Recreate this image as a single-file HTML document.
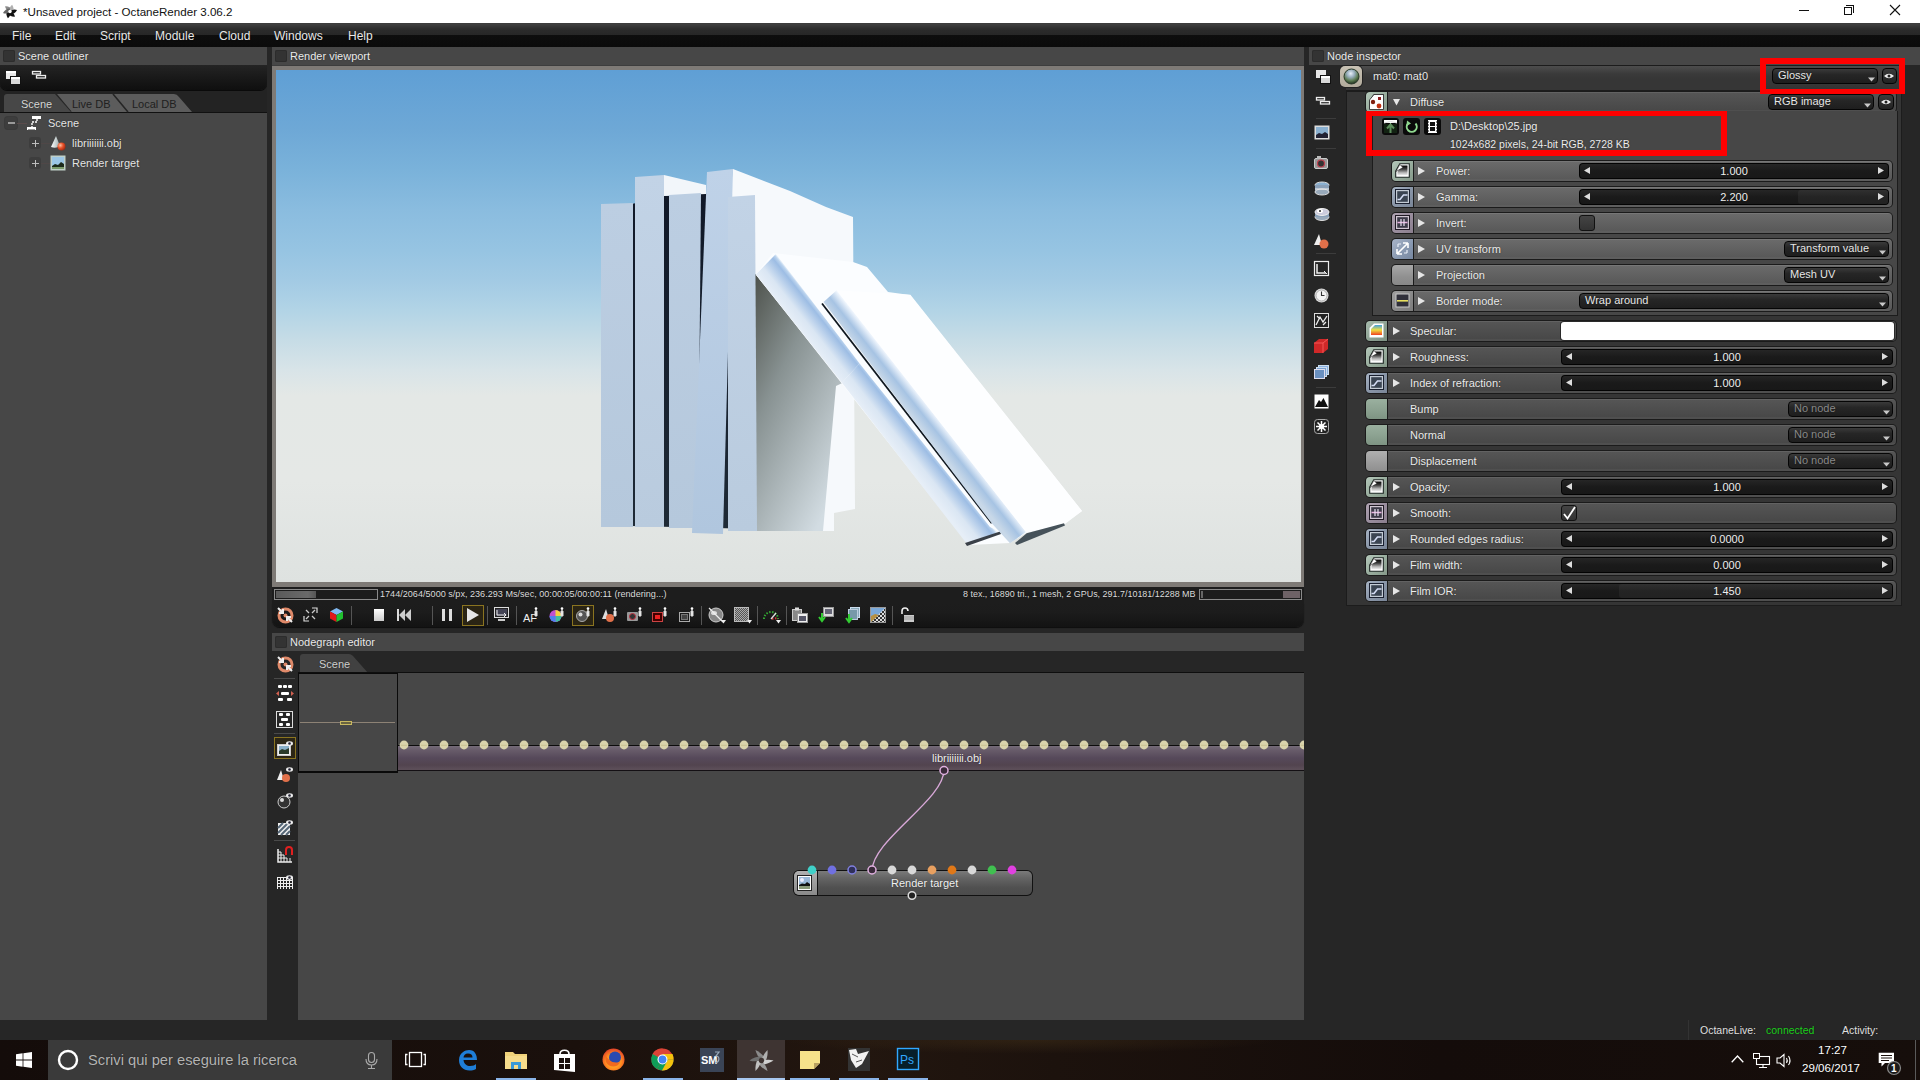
<!DOCTYPE html>
<html><head><meta charset="utf-8">
<style>
*{margin:0;padding:0;box-sizing:border-box}
html,body{width:1920px;height:1080px;overflow:hidden;background:#262626;font-family:"Liberation Sans",sans-serif;position:relative}
.a{position:absolute}
svg.a{overflow:visible}
.t{position:absolute;white-space:pre;color:#e6e6e6;font-size:11px;line-height:13px;text-shadow:0 0 1.2px rgba(0,0,0,0.55)}
#menu .t{font-size:12px;color:#e8e8e8;top:6px;line-height:15px}
.ph{position:absolute;height:18px;background:#474747}
.ph .sq{position:absolute;left:3px;top:3px;width:12px;height:12px;background:#333;border-radius:2px;box-shadow:inset 0 0 0 1px #2c2c2c}
.ph .t{left:18px;top:3px;color:#ececec}
</style></head><body>
<!-- title bar -->
<div class="a" style="left:0;top:0;width:1920px;height:23px;background:#fff">
  <svg class="a" style="left:3px;top:4px" width="14" height="15" viewBox="-7 -7.5 14 15"><path d="M0 0 C -2.2 -2.2 -2.6 -4.8 -1.6 -7 C 1.2 -5.6 3 -3.2 3 0 Z" fill="#8a8a8a" transform="rotate(-30)"/><path d="M0 0 C -2.2 -2.2 -2.6 -4.8 -1.6 -7 C 1.2 -5.6 3 -3.2 3 0 Z" fill="#b0b0b0" transform="rotate(30)"/><path d="M0 0 C -2.2 -2.2 -2.6 -4.8 -1.6 -7 C 1.2 -5.6 3 -3.2 3 0 Z" fill="#111" transform="rotate(90)"/><path d="M0 0 C -2.2 -2.2 -2.6 -4.8 -1.6 -7 C 1.2 -5.6 3 -3.2 3 0 Z" fill="#111" transform="rotate(150)"/><path d="M0 0 C -2.2 -2.2 -2.6 -4.8 -1.6 -7 C 1.2 -5.6 3 -3.2 3 0 Z" fill="#111" transform="rotate(210)"/><path d="M0 0 C -2.2 -2.2 -2.6 -4.8 -1.6 -7 C 1.2 -5.6 3 -3.2 3 0 Z" fill="#666" transform="rotate(270)"/><circle cx="0" cy="0" r="1.7" fill="#fff"/></svg>
  <div class="t" style="left:23px;top:5px;font-size:11.6px;color:#111;line-height:14px;text-shadow:none">*Unsaved project - OctaneRender 3.06.2</div>
  <div class="a" style="left:1799px;top:10px;width:10px;height:1px;background:#111"></div>
  <div class="a" style="left:1844px;top:7px;width:8px;height:8px;border:1px solid #111"></div>
  <div class="a" style="left:1846px;top:5px;width:8px;height:8px;border-top:1px solid #111;border-right:1px solid #111"></div>
  <svg class="a" style="left:1890px;top:5px" width="10" height="10" viewBox="0 0 10 10"><path d="M0 0 L10 10 M10 0 L0 10" stroke="#111" stroke-width="1.1"/></svg>
</div>
<div id="menu" class="a" style="left:0;top:23px;width:1920px;height:24px;background:linear-gradient(#3a3a3a 0,#404040 1px,#2c2c2c 6px,#272727 12px,#0e0e0e 12px,#0b0b0b 24px)">
  <div class="t" style="left:12px">File</div>
  <div class="t" style="left:55px">Edit</div>
  <div class="t" style="left:100px">Script</div>
  <div class="t" style="left:155px">Module</div>
  <div class="t" style="left:219px">Cloud</div>
  <div class="t" style="left:274px">Windows</div>
  <div class="t" style="left:348px">Help</div>
</div>
<!-- left panel -->
<div class="a" style="left:0;top:47px;width:267px;height:973px;background:#474747"></div>
<div class="ph" style="left:0;top:47px;width:267px"><div class="sq"></div><div class="t">Scene outliner</div></div>
<div class="a" style="left:0;top:65px;width:267px;height:48px;background:#232323"></div><div class="a" style="left:0;top:112px;width:267px;height:1px;background:#111"></div>
<div class="a" style="left:0;top:65px;width:267px;height:25px;background:linear-gradient(#242424,#181818 55%,#0f0f0f);border-radius:0 0 7px 7px;box-shadow:0 1px 0 #0a0a0a"></div>
<svg class="a" style="left:5px;top:70px" width="17" height="16" viewBox="0 0 17 16">
 <rect x="1" y="1" width="10" height="8" fill="#e8e8e8"/><rect x="1" y="1" width="10" height="2" fill="#fff"/>
 <rect x="5" y="6" width="11" height="9" fill="#111"/><rect x="6" y="7" width="9" height="7" fill="#d8d8d8"/><rect x="6" y="7" width="9" height="2" fill="#fff"/>
</svg>
<svg class="a" style="left:31px;top:70px" width="16" height="10" viewBox="0 0 16 10">
 <rect x="1.5" y="1.5" width="8" height="2.5" fill="none" stroke="#eee" stroke-width="1.3"/>
 <rect x="5.5" y="5.5" width="9" height="2.5" fill="none" stroke="#eee" stroke-width="1.3"/>
</svg>
<svg class="a" style="left:0;top:93px" width="267" height="20" viewBox="0 93 267 20">
 <path d="M113 94 L174 94 Q177 94 179 97 L192 112 L128 112 Z" fill="#5c5c5c"/>
 <path d="M56 94 L113 94 L128 112 L71 112 Z" fill="#5c5c5c"/>
 <path d="M113 94 L128 112 M56 94 L71 112" stroke="#262626" stroke-width="1.6"/>
 <path d="M4 112 L4 97 Q4 94 7 94 L55 94 L71 112 Z" fill="#474747"/>
</svg>
<div class="t" style="left:21px;top:98px;color:#d8d8d8">Scene</div>
<div class="t" style="left:72px;top:98px;color:#202020;text-shadow:none">Live DB</div>
<div class="t" style="left:132px;top:98px;color:#202020;text-shadow:none">Local DB</div>
<div class="a" style="left:5px;top:117px;width:12px;height:12px;border-radius:3px;background:#3d3d3d;box-shadow:0 0 0 1px #3a3a3a"></div>
<div class="a" style="left:8px;top:122px;width:7px;height:1.5px;background:#9a9a9a"></div>
<div class="a" style="left:17px;top:123px;width:10px;height:1px;background:#5a4b4b"></div>
<svg class="a" style="left:26px;top:115px" width="16" height="16" viewBox="0 0 16 16">
 <rect x="6" y="1" width="9" height="3" fill="#fff"/><rect x="1" y="12" width="9" height="3" fill="#fff"/>
 <path d="M11 4 L11 7 L6 7 L6 12" stroke="#fff" stroke-width="1.4" fill="none" stroke-dasharray="2 1"/>
 <rect x="2" y="14" width="7" height="1" fill="#999"/>
</svg>
<div class="t" style="left:48px;top:117px">Scene</div>
<div class="a" style="left:29px;top:137px;width:12px;height:12px;border-radius:3px;background:#3d3d3d"></div>
<div class="a" style="left:32px;top:142.5px;width:7px;height:1.3px;background:#bdbdbd"></div>
<div class="a" style="left:34.8px;top:139.5px;width:1.3px;height:7px;background:#bdbdbd"></div>
<div class="a" style="left:29px;top:157px;width:12px;height:12px;border-radius:3px;background:#3d3d3d"></div>
<div class="a" style="left:32px;top:162.5px;width:7px;height:1.3px;background:#bdbdbd"></div>
<div class="a" style="left:34.8px;top:159.5px;width:1.3px;height:7px;background:#bdbdbd"></div>
<div class="a" style="left:41px;top:143px;width:9px;height:1px;background:#4f4747"></div>
<div class="a" style="left:41px;top:163px;width:9px;height:1px;background:#4f4747"></div>
<svg class="a" style="left:50px;top:135px" width="16" height="16" viewBox="0 0 16 16">
 <defs><linearGradient id="cone" x1="0" x2="1"><stop offset="0" stop-color="#fff"/><stop offset="1" stop-color="#9aa"/></linearGradient>
 <radialGradient id="ball" cx="0.35" cy="0.35" r="0.7"><stop offset="0" stop-color="#ffc0a0"/><stop offset="0.5" stop-color="#e8522a"/><stop offset="1" stop-color="#a02810"/></radialGradient></defs>
 <path d="M6 1 L1 12 Q6 14 10 11 Z" fill="url(#cone)"/>
 <circle cx="11.5" cy="11.5" r="4" fill="url(#ball)"/>
</svg>
<div class="t" style="left:72px;top:137px">libriiiiiii.obj</div>
<svg class="a" style="left:50px;top:155px" width="16" height="16" viewBox="0 0 16 16">
 <rect x="0.5" y="0.5" width="15" height="15" fill="#bfcfc8"/>
 <rect x="2" y="2" width="12" height="12" fill="#9bc6e6"/>
 <path d="M2 11 L5 9 L8 10 L11 7 L14 9 L14 14 L2 14 Z" fill="#1c2a1c"/>
 <rect x="2" y="12" width="12" height="2" fill="#7a9a6a"/>
</svg>
<div class="t" style="left:72px;top:157px">Render target</div>
<!-- viewport -->
<div class="ph" style="left:272px;top:47px;width:1032px"><div class="sq"></div><div class="t">Render viewport</div></div>
<div class="a" style="left:272px;top:65px;width:1032px;height:522px;background:#7e7a76;border-top:1px solid #3d3d3d"></div>
<div class="a" style="left:276px;top:70px;width:1025px;height:512px;background:linear-gradient(#5f9fd5 0.0%,#6ea8d6 11.7%,#7ab2da 19.5%,#8abcdf 27.3%,#96c4e2 35.2%,#a2cae4 41.0%,#b2d4e6 46.9%,#c6dce6 52.7%,#d8e4e8 58.6%,#e4e8e6 63.5%,#e5e8e6 80.1%,#dee2e0 100.0%)"></div>
<svg class="a" style="left:0;top:0" width="1920" height="1080" viewBox="0 0 1920 1080">
<defs>
 <linearGradient id="sp1" x1="0" y1="0" x2="0" y2="1"><stop offset="0" stop-color="#bccee2"/><stop offset="1" stop-color="#b5c8dc"/></linearGradient>
 <linearGradient id="sp2" x1="0" y1="0" x2="0" y2="1"><stop offset="0" stop-color="#c2d3e6"/><stop offset="1" stop-color="#b9cbde"/></linearGradient>
 <linearGradient id="sp4" x1="0" y1="0" x2="0" y2="1"><stop offset="0" stop-color="#bfd2e8"/><stop offset="1" stop-color="#b0c6de"/></linearGradient>
 <linearGradient id="gap" x1="0" y1="0" x2="0" y2="1"><stop offset="0" stop-color="#101828"/><stop offset="1" stop-color="#1e2a36"/></linearGradient>
 <linearGradient id="shade" x1="0" y1="0" x2="0.7" y2="1"><stop offset="0" stop-color="#4c504a"/><stop offset="0.4" stop-color="#889292"/><stop offset="1" stop-color="#d2dce2"/></linearGradient>
 <linearGradient id="bandA" gradientUnits="userSpaceOnUse" x1="755.9" y1="274.6" x2="778.3" y2="256.8"><stop offset="0" stop-color="#e6eef7"/><stop offset="0.35" stop-color="#dae6f3"/><stop offset="0.82" stop-color="#9dbde4"/><stop offset="0.93" stop-color="#bcd4ee"/><stop offset="1" stop-color="#f4f8fc"/></linearGradient>
 <linearGradient id="bandB" gradientUnits="userSpaceOnUse" x1="821.9" y1="303.5" x2="837.5" y2="291.1"><stop offset="0" stop-color="#c8d8e8"/><stop offset="0.5" stop-color="#a6c3e3"/><stop offset="1" stop-color="#f6faff"/></linearGradient>
 <linearGradient id="ground" x1="0" y1="0" x2="0" y2="1"><stop offset="0" stop-color="#c8d0d0" stop-opacity="0.6"/><stop offset="1" stop-color="#dde2e0" stop-opacity="0"/></linearGradient>
</defs>
<polygon points="632,204 664,196 701,193 757,196 757,529 632,526" fill="url(#gap)"/>
<polygon points="601,204 633,203 633,527 601,527" fill="url(#sp1)"/>
<polygon points="635,177 664,175 664,527 635,527" fill="url(#sp2)"/>
<polygon points="664,175 706,185 706,194 664,196" fill="#f2f6fa"/>
<polygon points="669,195 701,193 698,528 669,528" fill="url(#sp1)"/>
<polygon points="730,197 733,169 790,191 826,207 853,217 855,509 834,513 834,531 757,531" fill="#f6f9fc"/>
<polygon points="754,272.5 842.3,383 836,386 823,531 754,531" fill="url(#shade)"/>
<polygon points="707,172 733,169 723,534 692,533" fill="url(#sp4)"/>
<polygon points="728,197 755,195 757,531 728,531" fill="url(#sp2)"/>
<polygon points="773,253 853,262 867,267 888,292 910,295 1082,511 1065,524 1026,533 1010,543 969,545 755.9,274.6" fill="#fbfdff"/>
<polygon points="755.9,274.6 776,253.9 859.6,363.5 841.9,382.8" fill="url(#bandA)"/>
<polygon points="841.9,382.8 859.6,363.5 990,527 1000,532 967,544" fill="url(#bandA)"/>
<polygon points="965,543 1000,531.5 1001,534 967,546" fill="#3a4048"/>
<path d="M822 303.5 L991.7 523.3" stroke="#101820" stroke-width="1.8"/>
<polygon points="823.5,302 836.7,290.2 1026,532 1010,543.3 991.7,523.3" fill="url(#bandB)"/>
<polygon points="836.7,290.2 910.4,294.8 1082,511 1065,523.3 1026,532" fill="#fdfeff"/>
<polygon points="1015,543 1026.7,533.3 1064,523.3 1065,525.5 1017,545" fill="#46525a"/>
</svg>
<div class="a" style="left:272px;top:587px;width:1032px;height:16px;background:#1d1d1d"></div>
<div class="a" style="left:274px;top:589px;width:104px;height:11px;border:1px solid #8a8a8a;background:#1c1c1c"></div>
<div class="a" style="left:276px;top:591px;width:40px;height:7px;background:linear-gradient(90deg,#5a5a5a,#6a6a6a 80%,#555)"></div>
<div class="t" style="left:380px;top:588px;font-size:9.1px;line-height:12px;color:#dcdcdc">1744/2064/5000 s/px, 236.293 Ms/sec, 00:00:05/00:00:11 (rendering...)</div>
<div class="t" style="left:963px;top:588px;font-size:8.95px;line-height:12px;color:#dcdcdc">8 tex., 16890 tri., 1 mesh, 2 GPUs, 291.7/10181/12288 MB</div>
<div class="a" style="left:1199px;top:589px;width:103px;height:11px;border:1px solid #8a8a8a;background:#1c1c1c"></div>
<div class="a" style="left:1201px;top:591px;width:2px;height:7px;background:#666"></div>
<div class="a" style="left:1283px;top:591px;width:17px;height:7px;background:#6e6266"></div>
<div class="a" style="left:272px;top:603px;width:1032px;height:30px;background:#262626"></div>
<div class="a" style="left:272px;top:603px;width:1032px;height:24px;background:linear-gradient(#1d1d1d,#1c1c1c 40%,#131313);border-radius:0 0 8px 8px;box-shadow:0 1px 1px #0e0e0e"></div>
<svg class="a" style="left:277px;top:607px" width="16" height="16" viewBox="0 0 16 16"><circle cx="8.5" cy="8.5" r="6.5" fill="none" stroke="#e08a6a" stroke-width="3"/><circle cx="8.5" cy="8.5" r="2" fill="#e08a6a"/><path d="M1 1 L6 6 M6 2 L6 6 L2 6" stroke="#eee" stroke-width="2" fill="none"/><path d="M15 15 L10 10 M10 14 L10 10 L14 10" stroke="#eee" stroke-width="2" fill="none"/></svg>
<svg class="a" style="left:303px;top:607px" width="15" height="15" viewBox="0 0 15 15"><path d="M1 9 L1 14 L6 14 M9 1 L14 1 L14 6" stroke="#ddd" stroke-width="1.2" fill="none"/><path d="M3 3 L6 6 M9 6 L12 3 M3 12 L6 9 M12 12 L9 9" stroke="#ccc" stroke-width="1.3"/></svg>
<svg class="a" style="left:329px;top:607px" width="15" height="16" viewBox="0 0 15 16"><path d="M7.5 1 L14 4.5 L7.5 8 L1 4.5 Z" fill="#80b8f0"/><path d="M1 4.5 L7.5 8 L7.5 15 L1 11.5 Z" fill="#e01818"/><path d="M14 4.5 L7.5 8 L7.5 15 L14 11.5 Z" fill="#20c030"/></svg>
<div class="a" style="left:351px;top:606px;width:1px;height:19px;background:#555"></div>
<div class="a" style="left:374px;top:609px;width:10px;height:12px;background:linear-gradient(#fff,#ccc)"></div>
<svg class="a" style="left:397px;top:609px" width="15" height="12" viewBox="0 0 15 12"><rect x="0" y="0" width="2" height="12" fill="#ddd"/><path d="M2 6 L8 0 L8 12 Z M8 6 L14 0 L14 12 Z" fill="#ccc"/></svg>
<div class="a" style="left:432px;top:606px;width:1px;height:19px;background:#555"></div>
<div class="a" style="left:442px;top:609px;width:3px;height:12px;background:#ddd"></div><div class="a" style="left:449px;top:609px;width:3px;height:12px;background:#ddd"></div>
<div class="a" style="left:462px;top:605px;width:22px;height:21px;border:1px solid #8a7420;background:#2a2414"></div>
<svg class="a" style="left:467px;top:608px" width="12" height="14" viewBox="0 0 12 14"><path d="M0 0 L12 7 L0 14 Z" fill="#e6e6e6"/></svg>
<div class="a" style="left:487px;top:606px;width:1px;height:19px;background:#555"></div>
<svg class="a" style="left:494px;top:607px" width="15" height="15" viewBox="0 0 15 15"><rect x="0.5" y="0.5" width="14" height="10" fill="#222" stroke="#ddd"/><rect x="2" y="2" width="11" height="7" fill="#445"/><path d="M3 3 L3 8 L12 8 M10 6 L12 8 L10 10" stroke="#eee" fill="none"/><rect x="4" y="12" width="7" height="2" fill="#ccc"/></svg>
<div class="a" style="left:516px;top:606px;width:1px;height:19px;background:#555"></div>
<svg class="a" style="left:523px;top:607px" width="15" height="16" viewBox="0 0 15 16"><text x="0" y="15" font-size="11" font-family="Liberation Sans" fill="#eee">AF</text><path d="M13 1 L13 5 M12 4 L14 4 L14 9 L12 9 Z" stroke="#ddd" stroke-width="1" fill="#eee"/><circle cx="13" cy="1.5" r="1.3" fill="#fff"/></svg>
<svg class="a" style="left:549px;top:607px" width="15" height="16" viewBox="0 0 15 16"><circle cx="6.5" cy="9" r="6" fill="#c050d0"/><path d="M6.5 9 L6.5 3 A6 6 0 0 1 12.5 9 Z" fill="#f0d040"/><path d="M6.5 9 L12.5 9 A6 6 0 0 1 6.5 15 Z" fill="#40c0a0"/><path d="M6.5 9 L6.5 15 A6 6 0 0 1 0.5 9 Z" fill="#5080f0"/><path d="M13 1 L13 5 M12 4 L14 4 L14 9 L12 9 Z" stroke="#ddd" stroke-width="1" fill="#eee"/><circle cx="13" cy="1.5" r="1.3" fill="#fff"/></svg>
<div class="a" style="left:572px;top:605px;width:22px;height:21px;border:1px solid #8a7420;background:#2a2414"></div>
<svg class="a" style="left:575px;top:607px" width="16" height="16" viewBox="0 0 16 16"><circle cx="7" cy="9" r="5.5" fill="#555" stroke="#aaa"/><circle cx="5.5" cy="7.5" r="2" fill="#ddd"/><path d="M13 1 L13 5 M12 4 L14 4 L14 9 L12 9 Z" stroke="#ddd" stroke-width="1" fill="#eee"/><circle cx="13" cy="1.5" r="1.3" fill="#fff"/></svg>
<svg class="a" style="left:602px;top:607px" width="15" height="16" viewBox="0 0 15 16"><path d="M4 2 L0 12 L7 12 Z" fill="#ddd"/><circle cx="8" cy="11" r="4" fill="#e0704a"/><path d="M13 1 L13 5 M12 4 L14 4 L14 9 L12 9 Z" stroke="#ddd" stroke-width="1" fill="#eee"/><circle cx="13" cy="1.5" r="1.3" fill="#fff"/></svg>
<svg class="a" style="left:627px;top:607px" width="15" height="16" viewBox="0 0 15 16"><rect x="0" y="5" width="11" height="9" rx="1" fill="#999"/><circle cx="5.5" cy="9.5" r="3" fill="#333" stroke="#c03040"/><path d="M13 1 L13 5 M12 4 L14 4 L14 9 L12 9 Z" stroke="#ddd" stroke-width="1" fill="#eee"/><circle cx="13" cy="1.5" r="1.3" fill="#fff"/></svg>
<svg class="a" style="left:652px;top:607px" width="15" height="16" viewBox="0 0 15 16"><rect x="0.5" y="5.5" width="10" height="9" fill="#400" stroke="#c44"/><rect x="3" y="8" width="5" height="4" fill="#e22"/><path d="M13 1 L13 5 M12 4 L14 4 L14 9 L12 9 Z" stroke="#ddd" stroke-width="1" fill="#eee"/><circle cx="13" cy="1.5" r="1.3" fill="#fff"/></svg>
<svg class="a" style="left:679px;top:607px" width="16" height="16" viewBox="0 0 16 16"><rect x="0.5" y="5.5" width="10" height="9" fill="none" stroke="#aaa"/><rect x="2.5" y="7.5" width="6" height="5" fill="#444" stroke="#777"/><path d="M13 1 L13 5 M12 4 L14 4 L14 9 L12 9 Z" stroke="#ddd" stroke-width="1" fill="#eee"/><circle cx="13" cy="1.5" r="1.3" fill="#fff"/></svg>
<div class="a" style="left:701px;top:606px;width:1px;height:19px;background:#555"></div>
<svg class="a" style="left:708px;top:607px" width="19" height="17" viewBox="0 0 19 17"><circle cx="8" cy="8" r="7" fill="#888" stroke="#ccc"/><ellipse cx="6" cy="6" rx="3" ry="2" fill="#ddd"/><path d="M1 1 L15 15" stroke="#eee" stroke-width="1.2"/><path d="M13 13 L18 13 L15.5 16.5 Z" fill="#eee"/></svg>
<svg class="a" style="left:734px;top:607px" width="19" height="17" viewBox="0 0 19 17"><rect x="0.5" y="0.5" width="14" height="14" fill="#777" stroke="#bbb"/><path d="M1 1 h13 v13 h-13 z" fill="url(#chk)"/><path d="M13 13 L18 13 L15.5 16.5 Z" fill="#eee"/><defs><pattern id="chk" width="2" height="2" patternUnits="userSpaceOnUse"><rect width="1" height="1" fill="#555"/><rect x="1" y="1" width="1" height="1" fill="#555"/><rect x="1" width="1" height="1" fill="#aaa"/><rect y="1" width="1" height="1" fill="#aaa"/></pattern></defs></svg>
<div class="a" style="left:757px;top:606px;width:1px;height:19px;background:#555"></div>
<svg class="a" style="left:762px;top:607px" width="20" height="17" viewBox="0 0 20 17"><path d="M2 12 A7 7 0 0 1 16 12" stroke="#3a3" stroke-width="2" stroke-dasharray="1.5 1.5" fill="none"/><path d="M10 12 A7 7 0 0 1 16 12" stroke="#c33" stroke-width="2" stroke-dasharray="1.5 1.5" fill="none"/><path d="M9 12 L14 6" stroke="#ddd" stroke-width="1.3"/><path d="M14 13 L19 13 L16.5 16.5 Z" fill="#eee"/></svg>
<div class="a" style="left:786px;top:606px;width:1px;height:19px;background:#555"></div>
<svg class="a" style="left:792px;top:607px" width="16" height="16" viewBox="0 0 16 16"><rect x="0.5" y="2.5" width="9" height="11" fill="#888" stroke="#ccc"/><rect x="3" y="0.5" width="4" height="3" fill="#ddd"/><rect x="5.5" y="6.5" width="10" height="9" fill="#eee" stroke="#999"/><rect x="7" y="9" width="7" height="5" fill="#556"/></svg>
<svg class="a" style="left:818px;top:607px" width="16" height="16" viewBox="0 0 16 16"><rect x="5.5" y="0.5" width="10" height="9" fill="#ddd" stroke="#999"/><rect x="7" y="2" width="7" height="5" fill="#667"/><path d="M4 6 L4 13 M1 10 L4 14 L7 10" stroke="#3c3" stroke-width="2" fill="none"/></svg>
<svg class="a" style="left:844px;top:607px" width="16" height="16" viewBox="0 0 16 16"><rect x="6.5" y="0.5" width="9" height="10" fill="#8ab" stroke="#cde"/><rect x="4.5" y="2.5" width="9" height="10" fill="#79a" stroke="#bcd"/><path d="M5 7 L5 14 M2 11 L5 15 L8 11" stroke="#3c3" stroke-width="2" fill="none"/></svg>
<svg class="a" style="left:870px;top:607px" width="16" height="16" viewBox="0 0 16 16"><rect x="0.5" y="0.5" width="15" height="15" fill="#ccc" stroke="#999"/><path d="M1 1 h14 v14 h-14z" fill="url(#chk2)"/><path d="M1 1 L15 1 L1 15 Z" fill="#7aa8d8"/><path d="M1 9 L5 7 L9 8 L1 15 Z" fill="#b89040"/><defs><pattern id="chk2" width="4" height="4" patternUnits="userSpaceOnUse"><rect width="4" height="4" fill="#ddd"/><rect width="2" height="2" fill="#333"/><rect x="2" y="2" width="2" height="2" fill="#333"/></pattern></defs></svg>
<div class="a" style="left:892px;top:606px;width:1px;height:19px;background:#555"></div>
<svg class="a" style="left:899px;top:607px" width="16" height="16" viewBox="0 0 16 16"><path d="M3 7 L3 4 A3 3 0 0 1 9 4" stroke="#eee" stroke-width="1.6" fill="none"/><rect x="5" y="8" width="10" height="7" fill="#ccc"/><path d="M5 10 h10 M5 12 h10" stroke="#888" stroke-width="0.7"/></svg>
<!-- nodegraph -->
<div class="ph" style="left:272px;top:633px;width:1032px"><div class="sq"></div><div class="t">Nodegraph editor</div></div>
<div class="a" style="left:272px;top:651px;width:1032px;height:369px;background:#262626"></div>
<svg class="a" style="left:298px;top:651px" width="100" height="22" viewBox="0 0 100 22"><path d="M2 22 L2 6 Q2 3 5 3 L51 3 Q53 3 55 5 L70 22 Z" fill="#414141"/></svg>
<div class="t" style="left:319px;top:658px;color:#d0d0d0">Scene</div>
<div class="a" style="left:298px;top:673px;width:1006px;height:347px;background:#474747"></div>
<div class="a" style="left:298px;top:672px;width:1006px;height:1px;background:#0e0e0e"></div>
<div class="a" style="left:298px;top:673px;width:100px;height:100px;border:1px solid #0a0a0a;border-width:1px 1px 2px 1px;background:#474747"></div>
<div class="a" style="left:300px;top:722px;width:95px;height:1px;background:#8d8275"></div>
<div class="a" style="left:340px;top:721px;width:12px;height:4px;border:1px solid #c8b860;background:#6a6440"></div>
<div class="a" style="left:398px;top:745px;width:906px;height:26px;background:linear-gradient(#0c0c0c 0,#0c0c0c 1px,#746a78 1px,#685c6a 5px,#56495a 13px,#52444f 20px,#5c4e58 24px,#5c4e58 25px,#141014 25px)"></div>
<svg class="a" style="left:398px;top:740px;overflow:hidden" width="906" height="12" viewBox="0 0 906 12"><circle cx="6" cy="5" r="4.4" fill="#dad4ac"/><path d="M3 5.3 h6" stroke="#c4bc8a" stroke-width="0.8"/><circle cx="26" cy="5" r="4.4" fill="#dad4ac"/><path d="M23 5.3 h6" stroke="#c4bc8a" stroke-width="0.8"/><circle cx="46" cy="5" r="4.4" fill="#dad4ac"/><path d="M43 5.3 h6" stroke="#c4bc8a" stroke-width="0.8"/><circle cx="66" cy="5" r="4.4" fill="#dad4ac"/><path d="M63 5.3 h6" stroke="#c4bc8a" stroke-width="0.8"/><circle cx="86" cy="5" r="4.4" fill="#dad4ac"/><path d="M83 5.3 h6" stroke="#c4bc8a" stroke-width="0.8"/><circle cx="106" cy="5" r="4.4" fill="#dad4ac"/><path d="M103 5.3 h6" stroke="#c4bc8a" stroke-width="0.8"/><circle cx="126" cy="5" r="4.4" fill="#dad4ac"/><path d="M123 5.3 h6" stroke="#c4bc8a" stroke-width="0.8"/><circle cx="146" cy="5" r="4.4" fill="#dad4ac"/><path d="M143 5.3 h6" stroke="#c4bc8a" stroke-width="0.8"/><circle cx="166" cy="5" r="4.4" fill="#dad4ac"/><path d="M163 5.3 h6" stroke="#c4bc8a" stroke-width="0.8"/><circle cx="186" cy="5" r="4.4" fill="#dad4ac"/><path d="M183 5.3 h6" stroke="#c4bc8a" stroke-width="0.8"/><circle cx="206" cy="5" r="4.4" fill="#dad4ac"/><path d="M203 5.3 h6" stroke="#c4bc8a" stroke-width="0.8"/><circle cx="226" cy="5" r="4.4" fill="#dad4ac"/><path d="M223 5.3 h6" stroke="#c4bc8a" stroke-width="0.8"/><circle cx="246" cy="5" r="4.4" fill="#dad4ac"/><path d="M243 5.3 h6" stroke="#c4bc8a" stroke-width="0.8"/><circle cx="266" cy="5" r="4.4" fill="#dad4ac"/><path d="M263 5.3 h6" stroke="#c4bc8a" stroke-width="0.8"/><circle cx="286" cy="5" r="4.4" fill="#dad4ac"/><path d="M283 5.3 h6" stroke="#c4bc8a" stroke-width="0.8"/><circle cx="306" cy="5" r="4.4" fill="#dad4ac"/><path d="M303 5.3 h6" stroke="#c4bc8a" stroke-width="0.8"/><circle cx="326" cy="5" r="4.4" fill="#dad4ac"/><path d="M323 5.3 h6" stroke="#c4bc8a" stroke-width="0.8"/><circle cx="346" cy="5" r="4.4" fill="#dad4ac"/><path d="M343 5.3 h6" stroke="#c4bc8a" stroke-width="0.8"/><circle cx="366" cy="5" r="4.4" fill="#dad4ac"/><path d="M363 5.3 h6" stroke="#c4bc8a" stroke-width="0.8"/><circle cx="386" cy="5" r="4.4" fill="#dad4ac"/><path d="M383 5.3 h6" stroke="#c4bc8a" stroke-width="0.8"/><circle cx="406" cy="5" r="4.4" fill="#dad4ac"/><path d="M403 5.3 h6" stroke="#c4bc8a" stroke-width="0.8"/><circle cx="426" cy="5" r="4.4" fill="#dad4ac"/><path d="M423 5.3 h6" stroke="#c4bc8a" stroke-width="0.8"/><circle cx="446" cy="5" r="4.4" fill="#dad4ac"/><path d="M443 5.3 h6" stroke="#c4bc8a" stroke-width="0.8"/><circle cx="466" cy="5" r="4.4" fill="#dad4ac"/><path d="M463 5.3 h6" stroke="#c4bc8a" stroke-width="0.8"/><circle cx="486" cy="5" r="4.4" fill="#dad4ac"/><path d="M483 5.3 h6" stroke="#c4bc8a" stroke-width="0.8"/><circle cx="506" cy="5" r="4.4" fill="#dad4ac"/><path d="M503 5.3 h6" stroke="#c4bc8a" stroke-width="0.8"/><circle cx="526" cy="5" r="4.4" fill="#dad4ac"/><path d="M523 5.3 h6" stroke="#c4bc8a" stroke-width="0.8"/><circle cx="546" cy="5" r="4.4" fill="#dad4ac"/><path d="M543 5.3 h6" stroke="#c4bc8a" stroke-width="0.8"/><circle cx="566" cy="5" r="4.4" fill="#dad4ac"/><path d="M563 5.3 h6" stroke="#c4bc8a" stroke-width="0.8"/><circle cx="586" cy="5" r="4.4" fill="#dad4ac"/><path d="M583 5.3 h6" stroke="#c4bc8a" stroke-width="0.8"/><circle cx="606" cy="5" r="4.4" fill="#dad4ac"/><path d="M603 5.3 h6" stroke="#c4bc8a" stroke-width="0.8"/><circle cx="626" cy="5" r="4.4" fill="#dad4ac"/><path d="M623 5.3 h6" stroke="#c4bc8a" stroke-width="0.8"/><circle cx="646" cy="5" r="4.4" fill="#dad4ac"/><path d="M643 5.3 h6" stroke="#c4bc8a" stroke-width="0.8"/><circle cx="666" cy="5" r="4.4" fill="#dad4ac"/><path d="M663 5.3 h6" stroke="#c4bc8a" stroke-width="0.8"/><circle cx="686" cy="5" r="4.4" fill="#dad4ac"/><path d="M683 5.3 h6" stroke="#c4bc8a" stroke-width="0.8"/><circle cx="706" cy="5" r="4.4" fill="#dad4ac"/><path d="M703 5.3 h6" stroke="#c4bc8a" stroke-width="0.8"/><circle cx="726" cy="5" r="4.4" fill="#dad4ac"/><path d="M723 5.3 h6" stroke="#c4bc8a" stroke-width="0.8"/><circle cx="746" cy="5" r="4.4" fill="#dad4ac"/><path d="M743 5.3 h6" stroke="#c4bc8a" stroke-width="0.8"/><circle cx="766" cy="5" r="4.4" fill="#dad4ac"/><path d="M763 5.3 h6" stroke="#c4bc8a" stroke-width="0.8"/><circle cx="786" cy="5" r="4.4" fill="#dad4ac"/><path d="M783 5.3 h6" stroke="#c4bc8a" stroke-width="0.8"/><circle cx="806" cy="5" r="4.4" fill="#dad4ac"/><path d="M803 5.3 h6" stroke="#c4bc8a" stroke-width="0.8"/><circle cx="826" cy="5" r="4.4" fill="#dad4ac"/><path d="M823 5.3 h6" stroke="#c4bc8a" stroke-width="0.8"/><circle cx="846" cy="5" r="4.4" fill="#dad4ac"/><path d="M843 5.3 h6" stroke="#c4bc8a" stroke-width="0.8"/><circle cx="866" cy="5" r="4.4" fill="#dad4ac"/><path d="M863 5.3 h6" stroke="#c4bc8a" stroke-width="0.8"/><circle cx="886" cy="5" r="4.4" fill="#dad4ac"/><path d="M883 5.3 h6" stroke="#c4bc8a" stroke-width="0.8"/><circle cx="906" cy="5" r="4.4" fill="#dad4ac"/><path d="M903 5.3 h6" stroke="#c4bc8a" stroke-width="0.8"/></svg>
<div class="t" style="left:932px;top:752px;color:#f0f0f0">libriiiiiii.obj</div>
<svg class="a" style="left:0;top:0" width="1920" height="1080" viewBox="0 0 1920 1080"><path d="M944 770 C 944 800, 872 840, 872 871" stroke="#d8a8d8" stroke-width="1.4" fill="none"/><circle cx="944" cy="770.5" r="4" fill="#3a2a3a" stroke="#e0b0e0" stroke-width="1.5"/></svg>
<div class="a" style="left:793px;top:870px;width:240px;height:26px;border-radius:6px;background:#111"></div>
<div class="a" style="left:794px;top:871px;width:238px;height:24px;border-radius:5px;background:linear-gradient(#7a7a7a,#646464 30%,#505050 70%,#4c4c4c)"></div>
<div class="a" style="left:794px;top:871px;width:24px;height:24px;border-radius:5px 0 0 5px;background:linear-gradient(#b0b0b0,#999 60%,#8a8a8a)"></div>
<div class="a" style="left:817px;top:871px;width:1px;height:24px;background:#111"></div>
<svg class="a" style="left:797px;top:875px" width="16" height="16" viewBox="0 0 16 16"><rect x="0.5" y="0.5" width="14" height="15" fill="#fff" stroke="#222"/><rect x="2" y="2" width="11" height="12" fill="#9ab8d8"/><circle cx="5" cy="5" r="2" fill="#eef"/><path d="M2 10 L5 8.5 L8 9 L10 7 L13 9 L13 11 L2 11Z" fill="#111"/><rect x="2" y="11" width="11" height="3" fill="#8a9a7a"/></svg>
<svg class="a" style="left:790px;top:864px" width="250" height="12" viewBox="0 0 250 12"><circle cx="22" cy="6" r="4.4" fill="#40d0c8"/><circle cx="42" cy="6" r="4.4" fill="#7070e0"/><circle cx="62" cy="6" r="4" fill="#30305a" stroke="#8080e0" stroke-width="1.5"/><circle cx="82" cy="6" r="4" fill="#3a2a3a" stroke="#e0b0e0" stroke-width="1.5"/><circle cx="102" cy="6" r="4.4" fill="#d8d8d8"/><circle cx="122" cy="6" r="4.4" fill="#d8d8d8"/><circle cx="142" cy="6" r="4.4" fill="#e8a060"/><circle cx="162" cy="6" r="4.4" fill="#e07818"/><circle cx="182" cy="6" r="4.4" fill="#d8d8d8"/><circle cx="202" cy="6" r="4.4" fill="#40c050"/><circle cx="222" cy="6" r="4.4" fill="#e040e0"/></svg>
<div class="t" style="left:891px;top:877px;color:#f2f2f2">Render target</div>
<svg class="a" style="left:905px;top:889px" width="14" height="14" viewBox="0 0 14 14"><circle cx="7" cy="6.5" r="3.8" fill="#222" stroke="#ddd" stroke-width="1.5"/></svg>
<svg class="a" style="left:277px;top:656px" width="16" height="16" viewBox="0 0 16 16"><circle cx="8.5" cy="8.5" r="6.5" fill="none" stroke="#e08a6a" stroke-width="3"/><circle cx="8.5" cy="8.5" r="2" fill="#e08a6a"/><path d="M1 1 L6 6 M6 2 L6 6 L2 6" stroke="#eee" stroke-width="2" fill="none"/><path d="M15 15 L10 10 M10 14 L10 10 L14 10" stroke="#eee" stroke-width="2" fill="none"/></svg>
<div class="a" style="left:274px;top:678px;width:21px;height:1px;background:#4a4a4a"></div>
<svg class="a" style="left:276px;top:685px" width="18" height="17" viewBox="0 0 18 17"><rect x="2" y="0" width="4" height="3" rx="1" fill="#fff"/><rect x="7" y="0" width="4" height="3" rx="1" fill="#fff"/><rect x="12" y="0" width="4" height="3" rx="1" fill="#fff"/><rect x="5" y="7" width="8" height="3" rx="1" fill="#fff"/><rect x="2" y="13" width="5" height="3" rx="1" fill="#fff"/><rect x="11" y="13" width="5" height="3" rx="1" fill="#fff"/><path d="M0 8.5 L3 6 L3 11Z M18 8.5 L15 6 L15 11Z" fill="#d06050"/></svg>
<svg class="a" style="left:276px;top:711px" width="17" height="17" viewBox="0 0 17 17"><rect x="0.5" y="0.5" width="16" height="16" fill="none" stroke="#ddd"/><rect x="3" y="2" width="4" height="3" rx="1" fill="#fff"/><rect x="10" y="2" width="4" height="3" rx="1" fill="#fff"/><rect x="5" y="7" width="7" height="3" rx="1" fill="#fff"/><rect x="3" y="12" width="4" height="3" rx="1" fill="#fff"/><rect x="10" y="12" width="4" height="3" rx="1" fill="#fff"/></svg>
<div class="a" style="left:274px;top:733px;width:21px;height:1px;background:#4a4a4a"></div>
<div class="a" style="left:274px;top:737px;width:22px;height:22px;border:1px solid #8a7420;background:#2c2616"></div>
<svg class="a" style="left:277px;top:740px" width="17" height="16" viewBox="0 0 17 16"><rect x="0.5" y="4.5" width="13" height="11" fill="#eee" stroke="#ccc"/><rect x="2" y="6" width="10" height="8" fill="#8ab0c8"/><path d="M2 11 L5 9 L8 10 L12 8 L12 14 L2 14Z" fill="#2a3a2a"/><path d="M9 3.5 a3.5 2.2 0 1 0 7 0 a3.5 2.2 0 1 0 -7 0" fill="#eee"/><circle cx="12.5" cy="3.5" r="1.3" fill="#223"/></svg>
<svg class="a" style="left:277px;top:766px" width="17" height="17" viewBox="0 0 17 17"><path d="M4 4 L0 14 L7 14 Z" fill="#eee"/><circle cx="9" cy="12" r="4" fill="#e0704a"/><path d="M9 3.5 a3.5 2.2 0 1 0 7 0 a3.5 2.2 0 1 0 -7 0" fill="#eee"/><circle cx="12.5" cy="3.5" r="1.3" fill="#223"/></svg>
<svg class="a" style="left:277px;top:792px" width="17" height="17" viewBox="0 0 17 17"><circle cx="7" cy="10" r="6" fill="#333" stroke="#ccc" stroke-width="1"/><circle cx="5" cy="8" r="2" fill="#ddd"/><path d="M9 3.5 a3.5 2.2 0 1 0 7 0 a3.5 2.2 0 1 0 -7 0" fill="#eee"/><circle cx="12.5" cy="3.5" r="1.3" fill="#223"/></svg>
<svg class="a" style="left:277px;top:819px" width="17" height="17" viewBox="0 0 17 17"><path d="M1 4 L13 4 L13 16 L1 16 Z" fill="#eee"/><path d="M1 9 L6 4 M1 14 L11 4 M4 16 L13 7 M9 16 L13 12" stroke="#567" stroke-width="2"/><path d="M9 3.5 a3.5 2.2 0 1 0 7 0 a3.5 2.2 0 1 0 -7 0" fill="#eee"/><circle cx="12.5" cy="3.5" r="1.3" fill="#223"/></svg>
<div class="a" style="left:274px;top:840px;width:21px;height:1px;background:#4a4a4a"></div>
<svg class="a" style="left:277px;top:847px" width="16" height="16" viewBox="0 0 16 16"><path d="M1 2 v13 h14" stroke="#eee" stroke-width="1.5" fill="none"/><path d="M1 5 h3 M1 8 h6 M1 11 h9 M4 5 v10 M7 8 v7 M10 11 v4 M13 11 v4" stroke="#eee" stroke-width="1"/><path d="M9 8 L9 3 A3 3 0 0 1 15 3 L15 8" stroke="#e02020" stroke-width="2" fill="none"/></svg>
<svg class="a" style="left:277px;top:874px" width="16" height="15" viewBox="0 0 16 15"><path d="M0.5 3.5 h15 M0.5 6.5 h15 M0.5 9.5 h15 M0.5 12.5 h15 M0.5 3 v12 M3.5 3 v12 M6.5 3 v12 M9.5 3 v12 M12.5 3 v12 M15.5 3 v12" stroke="#eee" stroke-width="1"/><path d="M9 3.5 a3.5 2.2 0 1 0 7 0 a3.5 2.2 0 1 0 -7 0" fill="#eee"/><circle cx="12.5" cy="3.5" r="1.3" fill="#223"/></svg>
<!-- inspector -->
<div class="ph" style="left:1309px;top:47px;width:611px"><div class="sq"></div><div class="t">Node inspector</div></div>
<div class="a" style="left:1346px;top:65px;width:556px;height:541px;background:#353535;border:1px solid #1c1c1c;border-top:none"></div>
<div class="a" style="left:1346px;top:65px;width:556px;height:27px;background:linear-gradient(#1c1c1c 0,#1c1c1c 1px,#4d4d4d 1px,#3a3a3a 9px,#363636 14px,#363636 25px,#1c1c1c 25px)"></div>
<div class="a" style="left:1311px;top:65px;width:35px;height:27px;background:#262626"></div>
<div class="a" style="left:1340px;top:66px;width:22px;height:21px;border-radius:5px;background:linear-gradient(#c8c2b4,#b2ab9c);box-shadow:0 0 0 1px #222"></div>
<svg class="a" style="left:1342px;top:67px" width="19" height="19" viewBox="0 0 19 19"><defs><radialGradient id="sph" cx="0.45" cy="0.3" r="0.7"><stop offset="0" stop-color="#e8f0f8"/><stop offset="0.35" stop-color="#9ab0c0"/><stop offset="0.7" stop-color="#5a7a50"/><stop offset="1" stop-color="#203020"/></radialGradient></defs><circle cx="9.5" cy="9.5" r="7.5" fill="url(#sph)" stroke="#2a3a2a" stroke-width="1"/></svg>
<div class="t" style="left:1373px;top:70px;color:#e8e8e8">mat0: mat0</div>
<div class="a" style="left:1765px;top:66px;width:136px;height:25px;background:linear-gradient(#4a4a4a,#3a3a3a 40%,#333)"></div>
<div class="a" style="left:1772px;top:68px;width:106px;height:16px;border-radius:4px;border:1px solid #050505;background:linear-gradient(#3a3a3a,#262626 40%,#1e1e1e)"></div>
<div class="t" style="left:1778px;top:69px;color:#e8e8e8">Glossy</div>
<svg class="a" style="left:1868px;top:77px" width="7" height="5" viewBox="0 0 7 5"><path d="M0 0.5 L7 0.5 L3.5 4.5 Z" fill="#c8c8c8"/></svg>
<div class="a" style="left:1882px;top:68px;width:15px;height:16px;border-radius:4px;border:1px solid #050505;background:linear-gradient(#3a3a3a,#222)"></div>
<svg class="a" style="left:1884px;top:73px" width="10" height="6" viewBox="0 0 10 6"><path d="M0 3 Q5 -1.5 10 3 Q5 7.5 0 3 Z" fill="#eee"/><circle cx="5" cy="3" r="1.5" fill="#222"/></svg>
<div class="a" style="left:1365px;top:91px;width:532px;height:22px;border-radius:5px;background:#1b1b1b"></div>
<div class="a" style="left:1388px;top:92px;width:508px;height:20px;border-radius:0 4px 4px 0;background:linear-gradient(#626262 0,#626262 1px,#555555 1px,#484848 18px,#4f4f4f 18px)"></div>
<div class="a" style="left:1366px;top:92px;width:21px;height:20px;border-radius:4px 0 0 4px;background:linear-gradient(135deg,#b4c8ba,#9aae9f 50%,#86998a)"></div>
<svg class="a" style="left:1369px;top:94px" width="15" height="15" viewBox="0 0 15 15"><defs><linearGradient id="bw" x1="0" y1="0" x2="0" y2="1"><stop offset="0" stop-color="#050505"/><stop offset="0.35" stop-color="#3a3a3a"/><stop offset="0.7" stop-color="#b0b0b0"/><stop offset="1" stop-color="#f4f4f4"/></linearGradient></defs><path d="M0.7 8 L4.8 0.7 L14.3 0.7 L14.3 14.3 L0.7 14.3 Z" fill="#fff" stroke="#1a2420" stroke-width="1.1"/><path d="M2.5 9 L6 2.5 L12.5 2.5 L12.5 12.5 L2.5 12.5 Z" fill="url(#bw)"/><path d="M1 8.5 L4.8 1.5 L8 4.5 Z" fill="#fff" stroke="#222" stroke-width="0.6"/></svg>
<svg class="a" style="left:1393px;top:99px" width="7" height="7" viewBox="0 0 7 7"><path d="M0 0 L7 0 L3.5 6.5 Z" fill="#e6e6e6"/></svg>
<div class="t" style="left:1410px;top:96px;color:#ececec">Diffuse</div>
<svg class="a" style="left:1369px;top:94px" width="15" height="16" viewBox="0 0 15 16"><path d="M0.5 6 L5 0.5 L14.5 0.5 L14.5 15.5 L0.5 15.5 Z" fill="#fff" stroke="#222" stroke-width="0.8"/><circle cx="4" cy="8" r="2.2" fill="#802010"/><circle cx="10" cy="12" r="2.4" fill="#c03010"/><rect x="9" y="3" width="3" height="3" fill="#902020"/></svg>
<div class="a" style="left:1768px;top:94px;width:106px;height:16px;border-radius:4px;border:1px solid #050505;background:linear-gradient(#3a3a3a,#262626 40%,#1e1e1e)"></div>
<div class="t" style="left:1774px;top:95px;color:#e8e8e8">RGB image</div>
<svg class="a" style="left:1864px;top:103px" width="7" height="5" viewBox="0 0 7 5"><path d="M0 0.5 L7 0.5 L3.5 4.5 Z" fill="#c8c8c8"/></svg>
<div class="a" style="left:1878px;top:94px;width:16px;height:16px;border-radius:4px;border:1px solid #050505;background:linear-gradient(#3a3a3a,#222)"></div>
<svg class="a" style="left:1881px;top:99px" width="10" height="6" viewBox="0 0 10 6"><path d="M0 3 Q5 -1.5 10 3 Q5 7.5 0 3 Z" fill="#eee"/><circle cx="5" cy="3" r="1.5" fill="#222"/></svg>
<div class="a" style="left:1372px;top:111px;width:526px;height:205px;background:#474747;border-left:1px solid #1c1c1c;border-bottom:1px solid #1c1c1c;border-right:1px solid #1c1c1c"></div>
<div class="a" style="left:1382px;top:118px;width:17px;height:17px;border-radius:3px;background:#0a0a0a"></div>
<svg class="a" style="left:1383px;top:119px" width="15" height="15" viewBox="0 0 15 15"><rect x="1" y="1" width="13" height="3" fill="#fff"/><path d="M1 4 Q7.5 1 14 4" stroke="#ddd" fill="none"/><path d="M7.5 14 L7.5 7 M4 9.5 L7.5 5.5 L11 9.5" stroke="#9ee09e" stroke-width="2" fill="none"/><rect x="1" y="5" width="13" height="9" fill="#1a3a1a" opacity="0.5"/></svg>
<div class="a" style="left:1403px;top:118px;width:17px;height:17px;border-radius:3px;background:#0a0a0a"></div>
<svg class="a" style="left:1404px;top:119px" width="15" height="15" viewBox="0 0 15 15"><path d="M4 4.5 A5 5 0 1 0 11.5 4.5" stroke="#8fd88f" stroke-width="2" fill="none"/><path d="M3 1.5 L7 4.5 L2.5 7 Z" fill="#8fd88f"/></svg>
<div class="a" style="left:1424px;top:118px;width:17px;height:17px;border-radius:3px;background:#0a0a0a"></div>
<svg class="a" style="left:1425px;top:119px" width="15" height="15" viewBox="0 0 15 15"><rect x="3" y="1" width="9" height="13" fill="#fff"/><rect x="5" y="3" width="5" height="4" fill="#111"/><rect x="5" y="8" width="5" height="4" fill="#111"/><path d="M3 3 h1 M3 6 h1 M3 9 h1 M3 12 h1 M11 3 h1 M11 6 h1 M11 9 h1 M11 12 h1" stroke="#111"/></svg>
<div class="t" style="left:1450px;top:120px;color:#ececec">D:\Desktop\25.jpg</div>
<div class="t" style="left:1450px;top:138px;color:#ececec;font-size:10.5px">1024x682 pixels, 24-bit RGB, 2728 KB</div>
<div class="a" style="left:1391px;top:160px;width:502px;height:22px;border-radius:5px;background:#1b1b1b"></div>
<div class="a" style="left:1414px;top:161px;width:478px;height:20px;border-radius:0 4px 4px 0;background:linear-gradient(#777777 0,#777777 1px,#6a6a6a 1px,#595959 18px,#5e5e5e 18px)"></div>
<div class="a" style="left:1392px;top:161px;width:21px;height:20px;border-radius:4px 0 0 4px;background:linear-gradient(135deg,#b4c8ba,#9aae9f 50%,#86998a)"></div>
<svg class="a" style="left:1395px;top:163px" width="15" height="15" viewBox="0 0 15 15"><defs><linearGradient id="bw" x1="0" y1="0" x2="0" y2="1"><stop offset="0" stop-color="#050505"/><stop offset="0.35" stop-color="#3a3a3a"/><stop offset="0.7" stop-color="#b0b0b0"/><stop offset="1" stop-color="#f4f4f4"/></linearGradient></defs><path d="M0.7 8 L4.8 0.7 L14.3 0.7 L14.3 14.3 L0.7 14.3 Z" fill="#fff" stroke="#1a2420" stroke-width="1.1"/><path d="M2.5 9 L6 2.5 L12.5 2.5 L12.5 12.5 L2.5 12.5 Z" fill="url(#bw)"/><path d="M1 8.5 L4.8 1.5 L8 4.5 Z" fill="#fff" stroke="#222" stroke-width="0.6"/></svg>
<svg class="a" style="left:1418px;top:167px" width="7" height="8" viewBox="0 0 7 8"><path d="M0 0 L7 4 L0 8 Z" fill="#e6e6e6"/></svg>
<div class="t" style="left:1436px;top:165px;color:#ececec">Power:</div>
<div class="a" style="left:1579px;top:163px;width:310px;height:16px;border-radius:4px;background:#030303"></div>
<div class="a" style="left:1580px;top:164px;width:308px;height:14px;border-radius:3px;background:linear-gradient(#262626,#1a1a1a 50%,#181818)"></div>
<svg class="a" style="left:1584px;top:167px" width="6" height="7" viewBox="0 0 6 7"><path d="M6 0 L0 3.5 L6 7 Z" fill="#ddd"/></svg>
<svg class="a" style="left:1878px;top:167px" width="6" height="7" viewBox="0 0 6 7"><path d="M0 0 L6 3.5 L0 7 Z" fill="#ddd"/></svg>
<div class="t" style="left:1579px;top:165px;width:310px;text-align:center;color:#f0f0f0">1.000</div>
<div class="a" style="left:1391px;top:186px;width:502px;height:22px;border-radius:5px;background:#1b1b1b"></div>
<div class="a" style="left:1414px;top:187px;width:478px;height:20px;border-radius:0 4px 4px 0;background:linear-gradient(#777777 0,#777777 1px,#6a6a6a 1px,#595959 18px,#5e5e5e 18px)"></div>
<div class="a" style="left:1392px;top:187px;width:21px;height:20px;border-radius:4px 0 0 4px;background:linear-gradient(135deg,#a8b4c4,#8a96a8 50%,#7a8698)"></div>
<svg class="a" style="left:1395px;top:189px" width="15" height="15" viewBox="0 0 15 15"><rect x="0" y="0" width="15" height="15" fill="#1a2030"/><rect x="1" y="1" width="13" height="13" fill="#c4ccd6"/><rect x="2.2" y="2.2" width="10.6" height="10.6" fill="#3a4452"/><path d="M2.5 10.5 L5 10.5 L8.5 6 L12.5 6" stroke="#d4dcf4" stroke-width="1.6" fill="none"/></svg>
<svg class="a" style="left:1418px;top:193px" width="7" height="8" viewBox="0 0 7 8"><path d="M0 0 L7 4 L0 8 Z" fill="#e6e6e6"/></svg>
<div class="t" style="left:1436px;top:191px;color:#ececec">Gamma:</div>
<div class="a" style="left:1579px;top:189px;width:310px;height:16px;border-radius:4px;background:#030303"></div>
<div class="a" style="left:1580px;top:190px;width:308px;height:14px;border-radius:3px;background:linear-gradient(#262626,#1a1a1a 50%,#181818)"></div>
<div class="a" style="left:1798px;top:190px;width:90px;height:14px;border-radius:3px;background:linear-gradient(#303030,#242424 50%,#222)"></div>
<svg class="a" style="left:1584px;top:193px" width="6" height="7" viewBox="0 0 6 7"><path d="M6 0 L0 3.5 L6 7 Z" fill="#ddd"/></svg>
<svg class="a" style="left:1878px;top:193px" width="6" height="7" viewBox="0 0 6 7"><path d="M0 0 L6 3.5 L0 7 Z" fill="#ddd"/></svg>
<div class="t" style="left:1579px;top:191px;width:310px;text-align:center;color:#f0f0f0">2.200</div>
<div class="a" style="left:1391px;top:212px;width:502px;height:22px;border-radius:5px;background:#1b1b1b"></div>
<div class="a" style="left:1414px;top:213px;width:478px;height:20px;border-radius:0 4px 4px 0;background:linear-gradient(#777777 0,#777777 1px,#6a6a6a 1px,#595959 18px,#5e5e5e 18px)"></div>
<div class="a" style="left:1392px;top:213px;width:21px;height:20px;border-radius:4px 0 0 4px;background:linear-gradient(135deg,#b0a4b2,#9a8e9e 50%,#8a7e8e)"></div>
<svg class="a" style="left:1395px;top:215px" width="15" height="15" viewBox="0 0 15 15"><rect x="0" y="0" width="15" height="15" fill="#201a24"/><rect x="1" y="1" width="13" height="13" fill="#d0c6d2"/><rect x="2.2" y="2.2" width="10.6" height="10.6" fill="#3c3a48"/><path d="M2.5 7.5 h10" stroke="#e8b4e0" stroke-width="1.5"/><path d="M6 4 v7 M9 4 v7" stroke="#e8e0f0" stroke-width="1.2"/></svg>
<svg class="a" style="left:1418px;top:219px" width="7" height="8" viewBox="0 0 7 8"><path d="M0 0 L7 4 L0 8 Z" fill="#e6e6e6"/></svg>
<div class="t" style="left:1436px;top:217px;color:#ececec">Invert:</div>
<div class="a" style="left:1579px;top:215px;width:16px;height:16px;border-radius:3px;border:1px solid #111;background:linear-gradient(#444,#333)"></div>
<div class="a" style="left:1391px;top:238px;width:502px;height:22px;border-radius:5px;background:#1b1b1b"></div>
<div class="a" style="left:1414px;top:239px;width:478px;height:20px;border-radius:0 4px 4px 0;background:linear-gradient(#777777 0,#777777 1px,#6a6a6a 1px,#595959 18px,#5e5e5e 18px)"></div>
<div class="a" style="left:1392px;top:239px;width:21px;height:20px;border-radius:4px 0 0 4px;background:linear-gradient(135deg,#a8b4c8,#8898b0 60%,#7888a0)"></div>
<svg class="a" style="left:1395px;top:241px" width="15" height="15" viewBox="0 0 15 15"><path d="M2 13 L13 2 M2 13 L2 8 M2 13 L7 13 M13 2 L8 2 M13 2 L13 7" stroke="#fff" stroke-width="1.6" fill="none"/><path d="M3 3 L6 3 M3 3 L3 6 M12 12 L9 12 M12 12 L12 9" stroke="#e8eef8" stroke-width="1.2"/></svg>
<svg class="a" style="left:1418px;top:245px" width="7" height="8" viewBox="0 0 7 8"><path d="M0 0 L7 4 L0 8 Z" fill="#e6e6e6"/></svg>
<div class="t" style="left:1436px;top:243px;color:#ececec">UV transform</div>
<div class="a" style="left:1784px;top:241px;width:105px;height:16px;border-radius:4px;border:1px solid #050505;background:linear-gradient(#3a3a3a,#262626 40%,#1e1e1e)"></div>
<div class="t" style="left:1790px;top:242px;color:#e8e8e8">Transform value</div>
<svg class="a" style="left:1879px;top:250px" width="7" height="5" viewBox="0 0 7 5"><path d="M0 0.5 L7 0.5 L3.5 4.5 Z" fill="#c8c8c8"/></svg>
<div class="a" style="left:1391px;top:264px;width:502px;height:22px;border-radius:5px;background:#1b1b1b"></div>
<div class="a" style="left:1414px;top:265px;width:478px;height:20px;border-radius:0 4px 4px 0;background:linear-gradient(#777777 0,#777777 1px,#6a6a6a 1px,#595959 18px,#5e5e5e 18px)"></div>
<div class="a" style="left:1392px;top:265px;width:21px;height:20px;border-radius:4px 0 0 4px;background:linear-gradient(#a8a8a8,#909090 60%,#888)"></div>
<svg class="a" style="left:1418px;top:271px" width="7" height="8" viewBox="0 0 7 8"><path d="M0 0 L7 4 L0 8 Z" fill="#e6e6e6"/></svg>
<div class="t" style="left:1436px;top:269px;color:#ececec">Projection</div>
<div class="a" style="left:1784px;top:267px;width:105px;height:16px;border-radius:4px;border:1px solid #050505;background:linear-gradient(#3a3a3a,#262626 40%,#1e1e1e)"></div>
<div class="t" style="left:1790px;top:268px;color:#e8e8e8">Mesh UV</div>
<svg class="a" style="left:1879px;top:276px" width="7" height="5" viewBox="0 0 7 5"><path d="M0 0.5 L7 0.5 L3.5 4.5 Z" fill="#c8c8c8"/></svg>
<div class="a" style="left:1391px;top:290px;width:502px;height:22px;border-radius:5px;background:#1b1b1b"></div>
<div class="a" style="left:1414px;top:291px;width:478px;height:20px;border-radius:0 4px 4px 0;background:linear-gradient(#777777 0,#777777 1px,#6a6a6a 1px,#595959 18px,#5e5e5e 18px)"></div>
<div class="a" style="left:1392px;top:291px;width:21px;height:20px;border-radius:4px 0 0 4px;background:linear-gradient(135deg,#a0a0a0,#888 60%,#7c7c7c)"></div>
<svg class="a" style="left:1395px;top:293px" width="15" height="15" viewBox="0 0 15 15"><rect x="0.5" y="0.5" width="14" height="14" fill="#c8c8c8"/><rect x="1.5" y="1.5" width="12" height="12" fill="#30303a"/><rect x="2" y="7" width="11" height="1.6" fill="#e8e060"/></svg>
<svg class="a" style="left:1418px;top:297px" width="7" height="8" viewBox="0 0 7 8"><path d="M0 0 L7 4 L0 8 Z" fill="#e6e6e6"/></svg>
<div class="t" style="left:1436px;top:295px;color:#ececec">Border mode:</div>
<div class="a" style="left:1579px;top:293px;width:310px;height:16px;border-radius:4px;border:1px solid #050505;background:linear-gradient(#3a3a3a,#262626 40%,#1e1e1e)"></div>
<div class="t" style="left:1585px;top:294px;color:#e8e8e8">Wrap around</div>
<svg class="a" style="left:1879px;top:302px" width="7" height="5" viewBox="0 0 7 5"><path d="M0 0.5 L7 0.5 L3.5 4.5 Z" fill="#c8c8c8"/></svg>
<div class="a" style="left:1365px;top:320px;width:532px;height:22px;border-radius:5px;background:#1b1b1b"></div>
<div class="a" style="left:1388px;top:321px;width:508px;height:20px;border-radius:0 4px 4px 0;background:linear-gradient(#626262 0,#626262 1px,#555555 1px,#484848 18px,#4f4f4f 18px)"></div>
<div class="a" style="left:1366px;top:321px;width:21px;height:20px;border-radius:4px 0 0 4px;background:linear-gradient(135deg,#a8bcae,#8a9e90 60%,#7e9284)"></div>
<svg class="a" style="left:1369px;top:323px" width="15" height="15" viewBox="0 0 15 15"><defs><linearGradient id="rb" x1="0" y1="0" x2="0" y2="1"><stop offset="0" stop-color="#40a0e0"/><stop offset="0.5" stop-color="#f0e040"/><stop offset="1" stop-color="#f04020"/></linearGradient></defs><path d="M0.5 5 L5 0.5 L14.5 0.5 L14.5 14.5 L0.5 14.5 Z" fill="#fff"/><path d="M2 6 L6 2 L13 2 L13 12 L2 12 Z" fill="url(#rb)"/></svg>
<svg class="a" style="left:1393px;top:327px" width="7" height="8" viewBox="0 0 7 8"><path d="M0 0 L7 4 L0 8 Z" fill="#e6e6e6"/></svg>
<div class="t" style="left:1410px;top:325px;color:#ececec">Specular:</div>
<div class="a" style="left:1561px;top:322px;width:333px;height:18px;border-radius:3px;background:#fff;box-shadow:0 0 0 1px #2a2a2a"></div>
<div class="a" style="left:1365px;top:346px;width:532px;height:22px;border-radius:5px;background:#1b1b1b"></div>
<div class="a" style="left:1388px;top:347px;width:508px;height:20px;border-radius:0 4px 4px 0;background:linear-gradient(#626262 0,#626262 1px,#555555 1px,#484848 18px,#4f4f4f 18px)"></div>
<div class="a" style="left:1366px;top:347px;width:21px;height:20px;border-radius:4px 0 0 4px;background:linear-gradient(135deg,#b4c8ba,#9aae9f 50%,#86998a)"></div>
<svg class="a" style="left:1369px;top:349px" width="15" height="15" viewBox="0 0 15 15"><defs><linearGradient id="bw" x1="0" y1="0" x2="0" y2="1"><stop offset="0" stop-color="#050505"/><stop offset="0.35" stop-color="#3a3a3a"/><stop offset="0.7" stop-color="#b0b0b0"/><stop offset="1" stop-color="#f4f4f4"/></linearGradient></defs><path d="M0.7 8 L4.8 0.7 L14.3 0.7 L14.3 14.3 L0.7 14.3 Z" fill="#fff" stroke="#1a2420" stroke-width="1.1"/><path d="M2.5 9 L6 2.5 L12.5 2.5 L12.5 12.5 L2.5 12.5 Z" fill="url(#bw)"/><path d="M1 8.5 L4.8 1.5 L8 4.5 Z" fill="#fff" stroke="#222" stroke-width="0.6"/></svg>
<svg class="a" style="left:1393px;top:353px" width="7" height="8" viewBox="0 0 7 8"><path d="M0 0 L7 4 L0 8 Z" fill="#e6e6e6"/></svg>
<div class="t" style="left:1410px;top:351px;color:#ececec">Roughness:</div>
<div class="a" style="left:1561px;top:349px;width:332px;height:16px;border-radius:4px;background:#030303"></div>
<div class="a" style="left:1562px;top:350px;width:330px;height:14px;border-radius:3px;background:linear-gradient(#262626,#1a1a1a 50%,#181818)"></div>
<svg class="a" style="left:1566px;top:353px" width="6" height="7" viewBox="0 0 6 7"><path d="M6 0 L0 3.5 L6 7 Z" fill="#ddd"/></svg>
<svg class="a" style="left:1882px;top:353px" width="6" height="7" viewBox="0 0 6 7"><path d="M0 0 L6 3.5 L0 7 Z" fill="#ddd"/></svg>
<div class="t" style="left:1561px;top:351px;width:332px;text-align:center;color:#f0f0f0">1.000</div>
<div class="a" style="left:1365px;top:372px;width:532px;height:22px;border-radius:5px;background:#1b1b1b"></div>
<div class="a" style="left:1388px;top:373px;width:508px;height:20px;border-radius:0 4px 4px 0;background:linear-gradient(#626262 0,#626262 1px,#555555 1px,#484848 18px,#4f4f4f 18px)"></div>
<div class="a" style="left:1366px;top:373px;width:21px;height:20px;border-radius:4px 0 0 4px;background:linear-gradient(135deg,#a8b4c4,#8a96a8 50%,#7a8698)"></div>
<svg class="a" style="left:1369px;top:375px" width="15" height="15" viewBox="0 0 15 15"><rect x="0" y="0" width="15" height="15" fill="#1a2030"/><rect x="1" y="1" width="13" height="13" fill="#c4ccd6"/><rect x="2.2" y="2.2" width="10.6" height="10.6" fill="#3a4452"/><path d="M2.5 10.5 L5 10.5 L8.5 6 L12.5 6" stroke="#d4dcf4" stroke-width="1.6" fill="none"/></svg>
<svg class="a" style="left:1393px;top:379px" width="7" height="8" viewBox="0 0 7 8"><path d="M0 0 L7 4 L0 8 Z" fill="#e6e6e6"/></svg>
<div class="t" style="left:1410px;top:377px;color:#ececec">Index of refraction:</div>
<div class="a" style="left:1561px;top:375px;width:332px;height:16px;border-radius:4px;background:#030303"></div>
<div class="a" style="left:1562px;top:376px;width:330px;height:14px;border-radius:3px;background:linear-gradient(#262626,#1a1a1a 50%,#181818)"></div>
<svg class="a" style="left:1566px;top:379px" width="6" height="7" viewBox="0 0 6 7"><path d="M6 0 L0 3.5 L6 7 Z" fill="#ddd"/></svg>
<svg class="a" style="left:1882px;top:379px" width="6" height="7" viewBox="0 0 6 7"><path d="M0 0 L6 3.5 L0 7 Z" fill="#ddd"/></svg>
<div class="t" style="left:1561px;top:377px;width:332px;text-align:center;color:#f0f0f0">1.000</div>
<div class="a" style="left:1365px;top:398px;width:532px;height:22px;border-radius:5px;background:#1b1b1b"></div>
<div class="a" style="left:1388px;top:399px;width:508px;height:20px;border-radius:0 4px 4px 0;background:linear-gradient(#626262 0,#626262 1px,#555555 1px,#484848 18px,#4f4f4f 18px)"></div>
<div class="a" style="left:1366px;top:399px;width:21px;height:20px;border-radius:4px 0 0 4px;background:linear-gradient(#9ab09f,#8aa08f 60%,#7e9483)"></div>
<div class="t" style="left:1410px;top:403px;color:#ececec">Bump</div>
<div class="a" style="left:1788px;top:401px;width:105px;height:16px;border-radius:4px;border:1px solid #050505;background:linear-gradient(#3a3a3a,#262626 40%,#1e1e1e)"></div>
<div class="t" style="left:1794px;top:402px;color:#8a8a8a">No node</div>
<svg class="a" style="left:1883px;top:410px" width="7" height="5" viewBox="0 0 7 5"><path d="M0 0.5 L7 0.5 L3.5 4.5 Z" fill="#c8c8c8"/></svg>
<div class="a" style="left:1365px;top:424px;width:532px;height:22px;border-radius:5px;background:#1b1b1b"></div>
<div class="a" style="left:1388px;top:425px;width:508px;height:20px;border-radius:0 4px 4px 0;background:linear-gradient(#626262 0,#626262 1px,#555555 1px,#484848 18px,#4f4f4f 18px)"></div>
<div class="a" style="left:1366px;top:425px;width:21px;height:20px;border-radius:4px 0 0 4px;background:linear-gradient(#9ab09f,#8aa08f 60%,#7e9483)"></div>
<div class="t" style="left:1410px;top:429px;color:#ececec">Normal</div>
<div class="a" style="left:1788px;top:427px;width:105px;height:16px;border-radius:4px;border:1px solid #050505;background:linear-gradient(#3a3a3a,#262626 40%,#1e1e1e)"></div>
<div class="t" style="left:1794px;top:428px;color:#8a8a8a">No node</div>
<svg class="a" style="left:1883px;top:436px" width="7" height="5" viewBox="0 0 7 5"><path d="M0 0.5 L7 0.5 L3.5 4.5 Z" fill="#c8c8c8"/></svg>
<div class="a" style="left:1365px;top:450px;width:532px;height:22px;border-radius:5px;background:#1b1b1b"></div>
<div class="a" style="left:1388px;top:451px;width:508px;height:20px;border-radius:0 4px 4px 0;background:linear-gradient(#626262 0,#626262 1px,#555555 1px,#484848 18px,#4f4f4f 18px)"></div>
<div class="a" style="left:1366px;top:451px;width:21px;height:20px;border-radius:4px 0 0 4px;background:linear-gradient(#b0b0b0,#9c9c9c 60%,#909090)"></div>
<div class="t" style="left:1410px;top:455px;color:#ececec">Displacement</div>
<div class="a" style="left:1788px;top:453px;width:105px;height:16px;border-radius:4px;border:1px solid #050505;background:linear-gradient(#3a3a3a,#262626 40%,#1e1e1e)"></div>
<div class="t" style="left:1794px;top:454px;color:#8a8a8a">No node</div>
<svg class="a" style="left:1883px;top:462px" width="7" height="5" viewBox="0 0 7 5"><path d="M0 0.5 L7 0.5 L3.5 4.5 Z" fill="#c8c8c8"/></svg>
<div class="a" style="left:1365px;top:476px;width:532px;height:22px;border-radius:5px;background:#1b1b1b"></div>
<div class="a" style="left:1388px;top:477px;width:508px;height:20px;border-radius:0 4px 4px 0;background:linear-gradient(#626262 0,#626262 1px,#555555 1px,#484848 18px,#4f4f4f 18px)"></div>
<div class="a" style="left:1366px;top:477px;width:21px;height:20px;border-radius:4px 0 0 4px;background:linear-gradient(135deg,#b4c8ba,#9aae9f 50%,#86998a)"></div>
<svg class="a" style="left:1369px;top:479px" width="15" height="15" viewBox="0 0 15 15"><defs><linearGradient id="bw" x1="0" y1="0" x2="0" y2="1"><stop offset="0" stop-color="#050505"/><stop offset="0.35" stop-color="#3a3a3a"/><stop offset="0.7" stop-color="#b0b0b0"/><stop offset="1" stop-color="#f4f4f4"/></linearGradient></defs><path d="M0.7 8 L4.8 0.7 L14.3 0.7 L14.3 14.3 L0.7 14.3 Z" fill="#fff" stroke="#1a2420" stroke-width="1.1"/><path d="M2.5 9 L6 2.5 L12.5 2.5 L12.5 12.5 L2.5 12.5 Z" fill="url(#bw)"/><path d="M1 8.5 L4.8 1.5 L8 4.5 Z" fill="#fff" stroke="#222" stroke-width="0.6"/></svg>
<svg class="a" style="left:1393px;top:483px" width="7" height="8" viewBox="0 0 7 8"><path d="M0 0 L7 4 L0 8 Z" fill="#e6e6e6"/></svg>
<div class="t" style="left:1410px;top:481px;color:#ececec">Opacity:</div>
<div class="a" style="left:1561px;top:479px;width:332px;height:16px;border-radius:4px;background:#030303"></div>
<div class="a" style="left:1562px;top:480px;width:330px;height:14px;border-radius:3px;background:linear-gradient(#262626,#1a1a1a 50%,#181818)"></div>
<svg class="a" style="left:1566px;top:483px" width="6" height="7" viewBox="0 0 6 7"><path d="M6 0 L0 3.5 L6 7 Z" fill="#ddd"/></svg>
<svg class="a" style="left:1882px;top:483px" width="6" height="7" viewBox="0 0 6 7"><path d="M0 0 L6 3.5 L0 7 Z" fill="#ddd"/></svg>
<div class="t" style="left:1561px;top:481px;width:332px;text-align:center;color:#f0f0f0">1.000</div>
<div class="a" style="left:1365px;top:502px;width:532px;height:22px;border-radius:5px;background:#1b1b1b"></div>
<div class="a" style="left:1388px;top:503px;width:508px;height:20px;border-radius:0 4px 4px 0;background:linear-gradient(#626262 0,#626262 1px,#555555 1px,#484848 18px,#4f4f4f 18px)"></div>
<div class="a" style="left:1366px;top:503px;width:21px;height:20px;border-radius:4px 0 0 4px;background:linear-gradient(135deg,#b0a4b2,#9a8e9e 50%,#8a7e8e)"></div>
<svg class="a" style="left:1369px;top:505px" width="15" height="15" viewBox="0 0 15 15"><rect x="0" y="0" width="15" height="15" fill="#201a24"/><rect x="1" y="1" width="13" height="13" fill="#d0c6d2"/><rect x="2.2" y="2.2" width="10.6" height="10.6" fill="#3c3a48"/><path d="M2.5 7.5 h10" stroke="#e8b4e0" stroke-width="1.5"/><path d="M6 4 v7 M9 4 v7" stroke="#e8e0f0" stroke-width="1.2"/></svg>
<svg class="a" style="left:1393px;top:509px" width="7" height="8" viewBox="0 0 7 8"><path d="M0 0 L7 4 L0 8 Z" fill="#e6e6e6"/></svg>
<div class="t" style="left:1410px;top:507px;color:#ececec">Smooth:</div>
<div class="a" style="left:1561px;top:505px;width:16px;height:16px;border-radius:3px;border:1px solid #111;background:linear-gradient(#444,#333)"></div>
<svg class="a" style="left:1563px;top:506px" width="13" height="14" viewBox="0 0 13 14"><path d="M1 8 L4.5 12.5 L12 1" stroke="#fff" stroke-width="1.8" fill="none"/></svg>
<div class="a" style="left:1365px;top:528px;width:532px;height:22px;border-radius:5px;background:#1b1b1b"></div>
<div class="a" style="left:1388px;top:529px;width:508px;height:20px;border-radius:0 4px 4px 0;background:linear-gradient(#626262 0,#626262 1px,#555555 1px,#484848 18px,#4f4f4f 18px)"></div>
<div class="a" style="left:1366px;top:529px;width:21px;height:20px;border-radius:4px 0 0 4px;background:linear-gradient(135deg,#a8b4c4,#8a96a8 50%,#7a8698)"></div>
<svg class="a" style="left:1369px;top:531px" width="15" height="15" viewBox="0 0 15 15"><rect x="0" y="0" width="15" height="15" fill="#1a2030"/><rect x="1" y="1" width="13" height="13" fill="#c4ccd6"/><rect x="2.2" y="2.2" width="10.6" height="10.6" fill="#3a4452"/><path d="M2.5 10.5 L5 10.5 L8.5 6 L12.5 6" stroke="#d4dcf4" stroke-width="1.6" fill="none"/></svg>
<svg class="a" style="left:1393px;top:535px" width="7" height="8" viewBox="0 0 7 8"><path d="M0 0 L7 4 L0 8 Z" fill="#e6e6e6"/></svg>
<div class="t" style="left:1410px;top:533px;color:#ececec">Rounded edges radius:</div>
<div class="a" style="left:1561px;top:531px;width:332px;height:16px;border-radius:4px;background:#030303"></div>
<div class="a" style="left:1562px;top:532px;width:330px;height:14px;border-radius:3px;background:linear-gradient(#262626,#1a1a1a 50%,#181818)"></div>
<svg class="a" style="left:1566px;top:535px" width="6" height="7" viewBox="0 0 6 7"><path d="M6 0 L0 3.5 L6 7 Z" fill="#ddd"/></svg>
<svg class="a" style="left:1882px;top:535px" width="6" height="7" viewBox="0 0 6 7"><path d="M0 0 L6 3.5 L0 7 Z" fill="#ddd"/></svg>
<div class="t" style="left:1561px;top:533px;width:332px;text-align:center;color:#f0f0f0">0.0000</div>
<div class="a" style="left:1365px;top:554px;width:532px;height:22px;border-radius:5px;background:#1b1b1b"></div>
<div class="a" style="left:1388px;top:555px;width:508px;height:20px;border-radius:0 4px 4px 0;background:linear-gradient(#626262 0,#626262 1px,#555555 1px,#484848 18px,#4f4f4f 18px)"></div>
<div class="a" style="left:1366px;top:555px;width:21px;height:20px;border-radius:4px 0 0 4px;background:linear-gradient(135deg,#b4c8ba,#9aae9f 50%,#86998a)"></div>
<svg class="a" style="left:1369px;top:557px" width="15" height="15" viewBox="0 0 15 15"><defs><linearGradient id="bw" x1="0" y1="0" x2="0" y2="1"><stop offset="0" stop-color="#050505"/><stop offset="0.35" stop-color="#3a3a3a"/><stop offset="0.7" stop-color="#b0b0b0"/><stop offset="1" stop-color="#f4f4f4"/></linearGradient></defs><path d="M0.7 8 L4.8 0.7 L14.3 0.7 L14.3 14.3 L0.7 14.3 Z" fill="#fff" stroke="#1a2420" stroke-width="1.1"/><path d="M2.5 9 L6 2.5 L12.5 2.5 L12.5 12.5 L2.5 12.5 Z" fill="url(#bw)"/><path d="M1 8.5 L4.8 1.5 L8 4.5 Z" fill="#fff" stroke="#222" stroke-width="0.6"/></svg>
<svg class="a" style="left:1393px;top:561px" width="7" height="8" viewBox="0 0 7 8"><path d="M0 0 L7 4 L0 8 Z" fill="#e6e6e6"/></svg>
<div class="t" style="left:1410px;top:559px;color:#ececec">Film width:</div>
<div class="a" style="left:1561px;top:557px;width:332px;height:16px;border-radius:4px;background:#030303"></div>
<div class="a" style="left:1562px;top:558px;width:330px;height:14px;border-radius:3px;background:linear-gradient(#262626,#1a1a1a 50%,#181818)"></div>
<svg class="a" style="left:1566px;top:561px" width="6" height="7" viewBox="0 0 6 7"><path d="M6 0 L0 3.5 L6 7 Z" fill="#ddd"/></svg>
<svg class="a" style="left:1882px;top:561px" width="6" height="7" viewBox="0 0 6 7"><path d="M0 0 L6 3.5 L0 7 Z" fill="#ddd"/></svg>
<div class="t" style="left:1561px;top:559px;width:332px;text-align:center;color:#f0f0f0">0.000</div>
<div class="a" style="left:1365px;top:580px;width:532px;height:22px;border-radius:5px;background:#1b1b1b"></div>
<div class="a" style="left:1388px;top:581px;width:508px;height:20px;border-radius:0 4px 4px 0;background:linear-gradient(#626262 0,#626262 1px,#555555 1px,#484848 18px,#4f4f4f 18px)"></div>
<div class="a" style="left:1366px;top:581px;width:21px;height:20px;border-radius:4px 0 0 4px;background:linear-gradient(135deg,#a8b4c4,#8a96a8 50%,#7a8698)"></div>
<svg class="a" style="left:1369px;top:583px" width="15" height="15" viewBox="0 0 15 15"><rect x="0" y="0" width="15" height="15" fill="#1a2030"/><rect x="1" y="1" width="13" height="13" fill="#c4ccd6"/><rect x="2.2" y="2.2" width="10.6" height="10.6" fill="#3a4452"/><path d="M2.5 10.5 L5 10.5 L8.5 6 L12.5 6" stroke="#d4dcf4" stroke-width="1.6" fill="none"/></svg>
<svg class="a" style="left:1393px;top:587px" width="7" height="8" viewBox="0 0 7 8"><path d="M0 0 L7 4 L0 8 Z" fill="#e6e6e6"/></svg>
<div class="t" style="left:1410px;top:585px;color:#ececec">Film IOR:</div>
<div class="a" style="left:1561px;top:583px;width:332px;height:16px;border-radius:4px;background:#030303"></div>
<div class="a" style="left:1562px;top:584px;width:330px;height:14px;border-radius:3px;background:linear-gradient(#262626,#1a1a1a 50%,#181818)"></div>
<div class="a" style="left:1619px;top:584px;width:273px;height:14px;border-radius:3px;background:linear-gradient(#303030,#242424 50%,#222)"></div>
<svg class="a" style="left:1566px;top:587px" width="6" height="7" viewBox="0 0 6 7"><path d="M6 0 L0 3.5 L6 7 Z" fill="#ddd"/></svg>
<svg class="a" style="left:1882px;top:587px" width="6" height="7" viewBox="0 0 6 7"><path d="M0 0 L6 3.5 L0 7 Z" fill="#ddd"/></svg>
<div class="t" style="left:1561px;top:585px;width:332px;text-align:center;color:#f0f0f0">1.450</div>
<svg class="a" style="left:1315px;top:69px" width="16" height="16" viewBox="0 0 16 16"><rect x="1" y="1" width="10" height="8" fill="#e8e8e8"/><rect x="5" y="6" width="11" height="9" fill="#111"/><rect x="6" y="7" width="9" height="7" fill="#d8d8d8"/><rect x="6" y="7" width="9" height="2" fill="#fff"/></svg>
<svg class="a" style="left:1315px;top:96px" width="16" height="10" viewBox="0 0 16 10"><rect x="1.5" y="1.5" width="8" height="2.5" fill="none" stroke="#eee" stroke-width="1.3"/><rect x="5.5" y="5.5" width="9" height="2.5" fill="none" stroke="#eee" stroke-width="1.3"/></svg>
<div class="a" style="left:1316px;top:118px;width:20px;height:1px;background:#3c3c3c"></div>
<svg class="a" style="left:1314px;top:125px" width="16" height="15" viewBox="0 0 16 15"><rect x="0.5" y="0.5" width="15" height="14" fill="#ddd"/><rect x="2" y="2" width="12" height="11" fill="#8ab0d0"/><path d="M2 10 L5 8 L8 9 L11 7 L14 9 L14 13 L2 13Z" fill="#223"/></svg>
<div class="a" style="left:1316px;top:148px;width:20px;height:1px;background:#3c3c3c"></div>
<svg class="a" style="left:1314px;top:155px" width="16" height="15" viewBox="0 0 16 15"><rect x="0.5" y="3.5" width="13" height="10" rx="1.5" fill="#999" stroke="#ccc"/><circle cx="7" cy="8.5" r="3.5" fill="#333" stroke="#c04050" stroke-width="1.2"/><rect x="3" y="1" width="4" height="3" fill="#bbb"/></svg>
<svg class="a" style="left:1314px;top:181px" width="16" height="15" viewBox="0 0 16 15"><ellipse cx="8" cy="4" rx="7" ry="3" fill="#8ab0d0" stroke="#ddd"/><rect x="1" y="4" width="14" height="7" fill="#8aa0b8"/><ellipse cx="8" cy="11" rx="7" ry="3" fill="#9ab" stroke="#ddd"/><path d="M1 8 h14" stroke="#eee"/></svg>
<svg class="a" style="left:1314px;top:206px" width="16" height="16" viewBox="0 0 16 16"><ellipse cx="8" cy="11" rx="7" ry="3.5" fill="#9ab" stroke="#ddd"/><rect x="1" y="6" width="14" height="5" fill="#8aa0b8"/><ellipse cx="8" cy="6" rx="7" ry="3.5" fill="#ccd" stroke="#eee"/><ellipse cx="6" cy="5" rx="3" ry="2" fill="#fff"/><circle cx="6" cy="5" r="1" fill="#222"/></svg>
<svg class="a" style="left:1314px;top:233px" width="16" height="16" viewBox="0 0 16 16"><path d="M5 1 L0 12 L8 12 Z" fill="#eee"/><circle cx="10" cy="11" r="4.5" fill="#e0704a"/></svg>
<div class="a" style="left:1316px;top:253px;width:20px;height:1px;background:#3c3c3c"></div>
<svg class="a" style="left:1314px;top:261px" width="15" height="15" viewBox="0 0 15 15"><rect x="0.5" y="0.5" width="14" height="14" fill="none" stroke="#eee" stroke-width="1.2"/><path d="M3 3 L3 12 L12 12" stroke="#eee" stroke-width="1.5" fill="none"/><path d="M10 10 L13 13" stroke="#eee"/></svg>
<svg class="a" style="left:1314px;top:288px" width="15" height="15" viewBox="0 0 15 15"><circle cx="7.5" cy="7.5" r="7" fill="#ddd"/><circle cx="7.5" cy="7.5" r="5.5" fill="#f4f4f4" stroke="#888" stroke-width="0.6"/><path d="M7.5 3.5 L7.5 7.5 L10.5 7.5" stroke="#333" stroke-width="1.1" fill="none"/></svg>
<svg class="a" style="left:1314px;top:313px" width="15" height="15" viewBox="0 0 15 15"><rect x="0.5" y="0.5" width="14" height="14" fill="#222" stroke="#ddd"/><path d="M2 12 L6 4 L9 9 L13 3 M3 3 L6 6 M9 12 L12 9" stroke="#eee" stroke-width="1.3" fill="none"/></svg>
<svg class="a" style="left:1313px;top:338px" width="16" height="16" viewBox="0 0 16 16"><path d="M1 5 L6 1 L15 1 L15 11 L10 15 L1 15 Z" fill="#d02828"/><path d="M1 5 L10 5 L15 1 M10 5 L10 15" stroke="#ff6060" stroke-width="0.8" fill="none"/></svg>
<svg class="a" style="left:1313px;top:364px" width="16" height="16" viewBox="0 0 16 16"><rect x="5.5" y="1.5" width="10" height="9" fill="#8ab0e0" stroke="#cde"/><rect x="3.5" y="3.5" width="10" height="9" fill="#7aa0d0" stroke="#cde"/><rect x="1.5" y="5.5" width="10" height="9" fill="#6a90c0" stroke="#dde"/></svg>
<div class="a" style="left:1316px;top:387px;width:20px;height:1px;background:#3c3c3c"></div>
<svg class="a" style="left:1314px;top:394px" width="15" height="15" viewBox="0 0 15 15"><rect x="0.5" y="0.5" width="14" height="14" fill="#fff"/><path d="M1 13 L5 6 L7 8 L9.5 4 L14 13 Z" fill="#111"/></svg>
<svg class="a" style="left:1314px;top:419px" width="15" height="15" viewBox="0 0 15 15"><rect x="0.5" y="0.5" width="14" height="14" rx="3" fill="#222" stroke="#aaa"/><path d="M7.5 2 L7.5 13 M2 7.5 L13 7.5 M3.5 3.5 L11.5 11.5 M11.5 3.5 L3.5 11.5" stroke="#fff" stroke-width="1.5"/><circle cx="7.5" cy="7.5" r="2.5" fill="#fff"/></svg>
<div class="a" style="left:1760px;top:58px;width:145px;height:36px;border:5px solid #ff0000;border-width:6px 6px 5px 6px"></div>
<div class="a" style="left:1366px;top:111px;width:361px;height:45px;border:6px solid #ff0000;border-width:5px 6px 6px 6px"></div>
<!-- status bar -->
<div class="a" style="left:0px;top:1020px;width:1920px;height:20px;background:#262626"></div>
<div class="a" style="left:1688px;top:1020px;width:1px;height:20px;background:#333"></div>
<div class="t" style="left:1700px;top:1024px;color:#e0e0e0;font-size:10.5px">OctaneLive:</div>
<div class="t" style="left:1766px;top:1024px;color:#1ed01e;font-size:10.5px">connected</div>
<div class="t" style="left:1842px;top:1024px;color:#e0e0e0;font-size:10.5px">Activity:</div>
<!-- taskbar -->
<div class="a" style="left:0px;top:1040px;width:1920px;height:40px;background:linear-gradient(90deg,#140c0a 0%,#1a100c 30%,#22160f 45%,#1c120d 55%,#140c0a 75%,#160e0b 100%)"></div>
<div class="a" style="left:780px;top:1040px;width:500px;height:14px;background:radial-gradient(ellipse at 50% 0%,rgba(80,60,30,0.35),rgba(0,0,0,0) 70%)"></div>
<svg class="a" style="left:16px;top:1052px" width="16" height="16" viewBox="0 0 16 16"><path d="M0 2.2 L6.6 1.3 L6.6 7.5 L0 7.5 Z M7.4 1.2 L16 0 L16 7.5 L7.4 7.5 Z M0 8.4 L6.6 8.4 L6.6 14.7 L0 13.8 Z M7.4 8.4 L16 8.4 L16 16 L7.4 14.8 Z" fill="#fff"/></svg>
<div class="a" style="left:48px;top:1040px;width:344px;height:40px;background:#3a3a3a"></div>
<svg class="a" style="left:57px;top:1049px" width="22" height="22" viewBox="0 0 22 22"><circle cx="11" cy="11" r="9" fill="none" stroke="#fff" stroke-width="2.4"/></svg>
<div class="t" style="left:88px;top:1052px;color:#b4b4b4;font-size:14.7px;line-height:17px">Scrivi qui per eseguire la ricerca</div>
<svg class="a" style="left:365px;top:1052px" width="13" height="17" viewBox="0 0 13 17"><rect x="3.5" y="0.5" width="6" height="10" rx="3" fill="none" stroke="#aaa" stroke-width="1.1"/><path d="M1 7 Q1 13 6.5 13 Q12 13 12 7 M6.5 13 L6.5 16 M3 16.5 L10 16.5" stroke="#aaa" stroke-width="1.1" fill="none"/></svg>
<svg class="a" style="left:405px;top:1052px" width="21" height="15" viewBox="0 0 21 15"><rect x="4.5" y="0.5" width="12" height="14" fill="none" stroke="#fff" stroke-width="1.3"/><path d="M2.5 2.5 L0.7 2.5 L0.7 12.5 L2.5 12.5 M18.5 2.5 L20.3 2.5 L20.3 12.5 L18.5 12.5" stroke="#fff" stroke-width="1.3" fill="none"/></svg>
<svg class="a" style="left:456px;top:1049px" width="22" height="22" viewBox="0 0 22 22"><path d="M3 11 C3 4 9 1 13 1 C19 1 21 6 21 11 L7.5 11 C8 15 11 17 14 17 C17 17 19 16 20 15 L20 20 C18 21 16 21.5 13.5 21.5 C7 21.5 3 17 3 11 Z M7.5 8.5 L16.5 8.5 C16.5 6 15 4.5 12 4.5 C9 4.5 7.8 6.5 7.5 8.5 Z" fill="#1f7ed8"/></svg>
<svg class="a" style="left:505px;top:1050px" width="22" height="19" viewBox="0 0 22 19"><path d="M0 2 L8 2 L10 4 L22 4 L22 19 L0 19 Z" fill="#f0d27a"/><rect x="0" y="6" width="22" height="13" fill="#f6dc8c"/><path d="M6 19 L6 12 L16 12 L16 19 L13 19 L13 15 L9 15 L9 19 Z" fill="#3a9ad8"/></svg>
<div class="a" style="left:496px;top:1078px;width:40px;height:2px;background:#8ab4e8"></div>
<svg class="a" style="left:554px;top:1048px" width="21" height="24" viewBox="0 0 21 24"><path d="M6 6 C6 1 15 1 15 6" stroke="#fff" stroke-width="1.6" fill="none"/><path d="M0 6 L21 6 L21 24 L0 22 Z" fill="#fff"/><rect x="5" y="10" width="5" height="5" fill="#1a0f0c"/><rect x="11" y="10" width="5" height="5" fill="#1a0f0c"/><rect x="5" y="16" width="5" height="5" fill="#1a0f0c"/><rect x="11" y="16" width="5" height="5" fill="#1a0f0c"/></svg>
<svg class="a" style="left:602px;top:1048px" width="23" height="23" viewBox="0 0 23 23"><defs><radialGradient id="ff" cx="0.5" cy="0.6" r="0.6"><stop offset="0" stop-color="#ffcb30"/><stop offset="0.6" stop-color="#ff8a20"/><stop offset="1" stop-color="#e0402a"/></radialGradient></defs><circle cx="11.5" cy="11.5" r="11" fill="url(#ff)"/><circle cx="13" cy="9.5" r="6" fill="#2a4ab0"/><path d="M3 6 C6 12 10 16 18 14 C16 20 7 20 4 14 Z" fill="#f06a20"/></svg>
<svg class="a" style="left:651px;top:1048px" width="23" height="23" viewBox="0 0 23 23"><circle cx="11.5" cy="11.5" r="11" fill="#db4437"/><path d="M11.5 11.5 L22.5 11.5 A11 11 0 0 1 6 21 Z" fill="#0f9d58"/><path d="M11.5 11.5 L6 21 A11 11 0 0 1 1.5 6 L11.5 6 Z" fill="#0f9d58"/><path d="M11.5 11.5 L1.5 6 A11 11 0 0 1 11.5 0.5 Z" fill="#db4437"/><path d="M11.5 6 L21.5 6 A11 11 0 0 1 22.5 11.5 L11.5 11.5 Z" fill="#f4c20d"/><path d="M17 11.5 L22.5 11.5 A11 11 0 0 1 11 22.5 Z" fill="#f4c20d"/><circle cx="11.5" cy="11.5" r="5" fill="#fff"/><circle cx="11.5" cy="11.5" r="3.9" fill="#4285f4"/></svg>
<div class="a" style="left:643px;top:1078px;width:40px;height:2px;background:#8ab4e8"></div>
<svg class="a" style="left:700px;top:1048px" width="24" height="24" viewBox="0 0 24 24"><rect width="24" height="24" fill="#3a4456"/><text x="1" y="16" font-family="Liberation Sans" font-weight="bold" font-size="11" fill="#fff">SM</text><path d="M15 4 L19 4 L16 8 C20 8 20 14 15 15" stroke="#9ab" stroke-width="1.2" fill="none"/></svg>
<div class="a" style="left:737px;top:1040px;width:48px;height:38px;background:#3e3432"></div>
<svg class="a" style="left:749px;top:1048px" width="25" height="25" viewBox="-7.5 -7.5 15 15"><g transform="scale(1.05)"><path d="M0 0 C -1 -2.5 -1.5 -4.5 -1.2 -6.8 C 0.5 -5 1.8 -3 2.2 -0.5 Z" fill="#8a8a8a" transform="rotate(-20)"/><path d="M0 0 C -1 -2.5 -1.5 -4.5 -1.2 -6.8 C 0.5 -5 1.8 -3 2.2 -0.5 Z" fill="#b0b0b0" transform="rotate(40)"/><path d="M0 0 C -1 -2.5 -1.5 -4.5 -1.2 -6.8 C 0.5 -5 1.8 -3 2.2 -0.5 Z" fill="#d0d0d0" transform="rotate(100)"/><path d="M0 0 C -1 -2.5 -1.5 -4.5 -1.2 -6.8 C 0.5 -5 1.8 -3 2.2 -0.5 Z" fill="#9a9a9a" transform="rotate(160)"/><path d="M0 0 C -1 -2.5 -1.5 -4.5 -1.2 -6.8 C 0.5 -5 1.8 -3 2.2 -0.5 Z" fill="#c0c0c0" transform="rotate(220)"/><path d="M0 0 C -1 -2.5 -1.5 -4.5 -1.2 -6.8 C 0.5 -5 1.8 -3 2.2 -0.5 Z" fill="#707070" transform="rotate(280)"/></g><circle r="1.6" fill="#3e3432"/></svg>
<div class="a" style="left:737px;top:1078px;width:48px;height:2px;background:#a8c8f0"></div>
<svg class="a" style="left:800px;top:1051px" width="20" height="18" viewBox="0 0 20 18"><path d="M0 0 L20 0 L20 12 L14 18 L0 18 Z" fill="#f6e28a"/><path d="M14 18 L14 12 L20 12 Z" fill="#b8a060"/></svg>
<div class="a" style="left:790px;top:1078px;width:40px;height:2px;background:#8ab4e8"></div>
<svg class="a" style="left:848px;top:1048px" width="22" height="23" viewBox="0 0 22 23"><rect width="22" height="23" fill="#333"/><path d="M1 2 L8 1 L10 6 L21 3 L14 16 L8 20 L3 12 Z" fill="#f2f2f2"/><path d="M4 6 L10 9 M8 14 L14 12" stroke="#555" stroke-width="1"/></svg>
<div class="a" style="left:839px;top:1078px;width:40px;height:2px;background:#8ab4e8"></div>
<svg class="a" style="left:897px;top:1048px" width="22" height="22" viewBox="0 0 22 22"><rect x="0.5" y="0.5" width="21" height="21" fill="#061e2a" stroke="#31a8ff" stroke-width="1.4"/><text x="3" y="16" font-family="Liberation Sans" font-size="12" fill="#31a8ff">Ps</text></svg>
<div class="a" style="left:888px;top:1078px;width:40px;height:2px;background:#8ab4e8"></div>
<svg class="a" style="left:1731px;top:1055px" width="13" height="8" viewBox="0 0 13 8"><path d="M0.7 7.3 L6.5 1 L12.3 7.3" stroke="#fff" stroke-width="1.3" fill="none"/></svg>
<svg class="a" style="left:1753px;top:1053px" width="17" height="15" viewBox="0 0 17 15"><rect x="3.5" y="3.5" width="13" height="8" fill="none" stroke="#fff" stroke-width="1.1"/><path d="M10 11.5 L10 14 M6 14.5 L14 14.5" stroke="#fff" stroke-width="1.1"/><rect x="0.5" y="0.5" width="6" height="5" fill="#1a100c" stroke="#fff" stroke-width="1"/></svg>
<svg class="a" style="left:1776px;top:1053px" width="17" height="15" viewBox="0 0 17 15"><path d="M1 5 L4 5 L8 1.5 L8 13.5 L4 10 L1 10 Z" fill="none" stroke="#fff" stroke-width="1.1"/><path d="M10.5 5 Q12 7.5 10.5 10 M12.5 3 Q15.5 7.5 12.5 12" stroke="#fff" stroke-width="1.1" fill="none"/></svg>
<div class="t" style="left:1818px;top:1043px;color:#fff;font-size:11.6px;line-height:14px">17:27</div>
<div class="t" style="left:1802px;top:1061px;color:#fff;font-size:11.6px;line-height:14px">29/06/2017</div>
<svg class="a" style="left:1878px;top:1052px" width="18" height="16" viewBox="0 0 18 16"><path d="M0.7 0.7 L16 0.7 L16 11 L7 11 L3.5 14.5 L3.5 11 L0.7 11 Z" fill="#fff"/><path d="M3 3.5 h11 M3 6 h11 M3 8.5 h8" stroke="#1a100c" stroke-width="1"/></svg>
<svg class="a" style="left:1886px;top:1060px" width="16" height="16" viewBox="0 0 16 16"><circle cx="8" cy="8" r="6.5" fill="#1a1a1a" stroke="#888" stroke-width="1.2"/><text x="5" y="12" font-family="Liberation Sans" font-weight="bold" font-size="10" fill="#fff">1</text></svg>
<div class="a" style="left:1915px;top:1040px;width:1px;height:40px;background:#5a5a5a"></div>

</body></html>
